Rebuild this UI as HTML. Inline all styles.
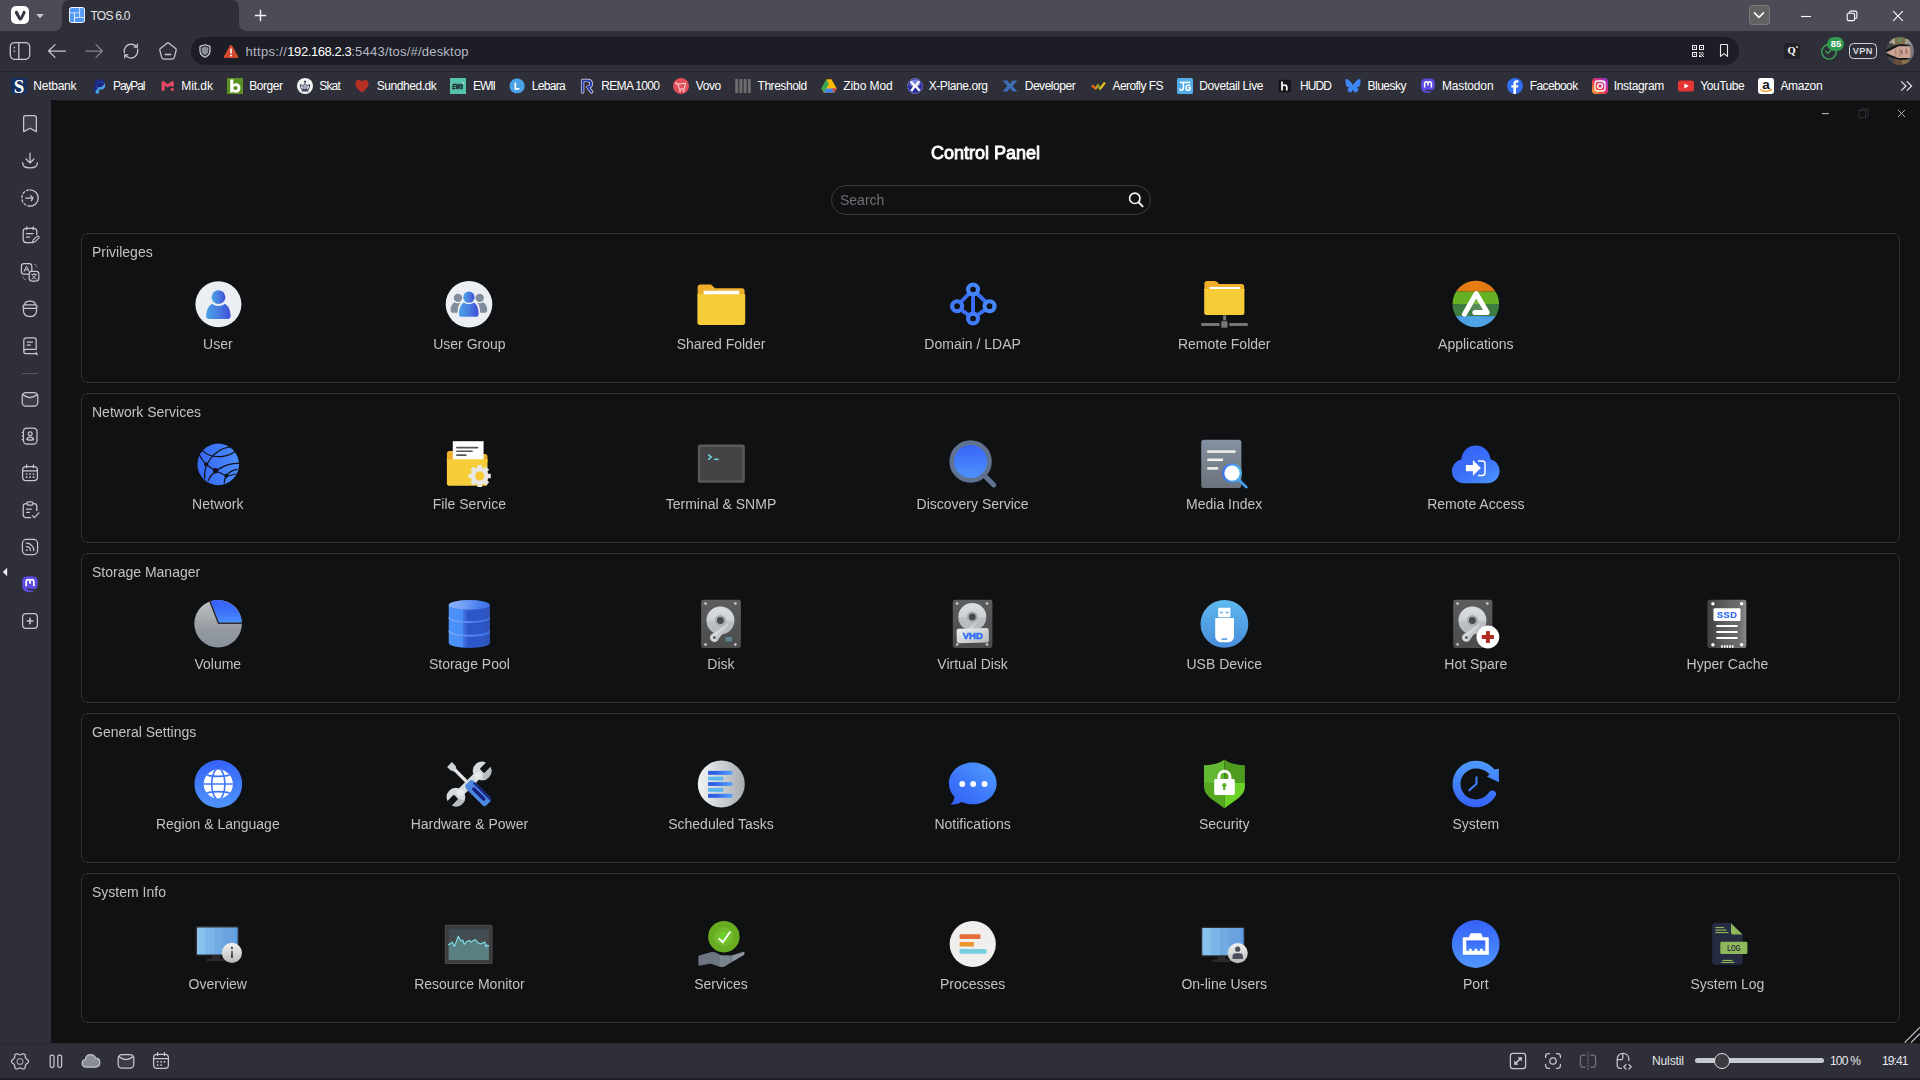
<!DOCTYPE html>
<html lang="en"><head><meta charset="utf-8"><title>TOS 6.0</title>
<style>
*{box-sizing:border-box;margin:0;padding:0}
html,body{width:1920px;height:1080px;overflow:hidden;background:#101113;font-family:"Liberation Sans",sans-serif;}
.abs{position:absolute}
#tabbar{position:absolute;left:0;top:0;width:1920px;height:31px;background:#4b4c56}
#toolbar{position:absolute;left:0;top:31px;width:1920px;height:41px;background:#2e2f38}
#tbline{position:absolute;left:0;top:71px;width:1920px;height:1px;background:#23242b}
#bmbar{position:absolute;left:0;top:72px;width:1920px;height:28px;background:#2e2f38}
#side{position:absolute;left:0;top:100px;width:51px;height:943px;background:#2e2f38}
#status{position:absolute;left:0;top:1043px;width:1920px;height:37px;background:#2e2f38;border-bottom:2px solid #1e1f25;box-shadow:inset 0 1px 0 #27282f}
#page{position:absolute;left:51px;top:100px;width:1869px;height:943px;background:#101113;border-radius:5px 5px 0 5px}
.sec{position:absolute;left:81px;width:1819px;height:150px;border:1px solid #303133;border-radius:6px}
.sect{position:absolute;left:92px;font-size:14px;line-height:16px;color:#c2c2c2;white-space:nowrap}
.lab{position:absolute;width:251.6px;text-align:center;font-size:14px;line-height:16px;color:#c2c2c2;white-space:nowrap}
.ico{position:absolute;width:48px;height:48px;overflow:visible}
.bm{position:absolute;top:78px;height:16px;font-size:12px;line-height:16px;color:#fff;white-space:nowrap}
svg{display:block;overflow:visible}
#pagecontent{position:absolute;left:0;top:0;width:1920px;height:1080px;will-change:transform}

.tx{position:absolute;white-space:nowrap}
.ic{position:absolute}
.st{fill:none;stroke:#c6c7cd;stroke-width:1.25;stroke-linecap:round;stroke-linejoin:round}
</style></head>
<body>
<div id="tabbar"></div><div id="toolbar"></div><div id="tbline"></div><div id="bmbar"></div>
<svg class="ic" style="left:54px;top:0" width="194" height="31" viewBox="0 0 194 31"><path d="M0 31C5 31 8 28 8 23V8C8 3 11 0 16 0H177C182 0 185 3 185 8V23C185 28 188 31 193 31Z" fill="#2e2f38"/></svg>
<svg class="ic" style="left:11px;top:6px" width="18" height="18" viewBox="0 0 18 18" ><rect width="18" height="18" rx="5" fill="#fff"/><path d="M5 6.2C5.6 5.2 7 5.4 7.4 6.4L9.3 10.4L11 6.6C11.2 5.6 12.4 5.2 13 6C13.4 6.6 13.3 7.2 13 7.8L10.6 12.4C10 13.5 8.4 13.5 7.8 12.4L5.2 7.8C4.9 7.2 4.8 6.7 5 6.2Z" fill="#34353e" transform="translate(9.1 9.4) scale(1.28 1.25) translate(-9 -9.2)"/></svg><svg class="ic" style="left:35px;top:13px" width="10" height="6" viewBox="0 0 10 6" ><path d="M1.2 1H8.8L5 5.2Z" fill="#c9c9cd"/></svg><svg class="ic" style="left:69.1px;top:7.1px" width="16" height="16" viewBox="0 0 16 16" ><rect width="16" height="16" rx="3" fill="#f4f6fa"/><path d="M.9 3.2C.9 1.8 1.8 .9 3.2 .9H10.3V5.4H.9Z" fill="#529af5"/><path d="M11.1 .9H12.8C14.2 .9 15.1 1.8 15.1 3.2V10H11.1Z" fill="#529af5"/><path d="M5.9 10.8H15.1V12.8C15.1 14.2 14.2 15.1 12.8 15.1H5.9Z" fill="#529af5"/><path d="M.9 6.2H5V15.1H3.2C1.8 15.1 .9 14.2 .9 12.8Z" fill="#529af5"/><rect x="5.9" y="6.2" width="4.4" height="3.8" fill="#529af5"/></svg><span class="tx" style="left:90.4px;top:7.8px;font-size:12px;line-height:16px;color:#e4e4e8;font-weight:normal;letter-spacing:-0.724px;">TOS 6.0</span><svg class="ic" style="left:254px;top:9px" width="13" height="13" viewBox="0 0 13 13" ><path d="M6.5 .8V12.2M.8 6.5H12.2" stroke="#f2f2f4" stroke-width="1.4" fill="none"/></svg><div class="ic" style="left:1748.5px;top:5px;width:21px;height:19.5px;background:#626264;border:1px solid #7b7b7e;border-radius:3.5px"></div><svg class="ic" style="left:1753px;top:10px" width="12" height="10" viewBox="0 0 12 10" ><path d="M1 2.4L6 7.4L11 2.4" fill="none" stroke="#fff" stroke-width="1.5"/></svg><svg class="ic" style="left:1801px;top:15px" width="10" height="3" viewBox="0 0 10 3" ><path d="M0 1.5H10" stroke="#fff" stroke-width="1.1"/></svg><svg class="ic" style="left:1846px;top:10px" width="12" height="12" viewBox="0 0 12 12" ><rect x="1.2" y="3.2" width="7.4" height="7.4" rx="1.4" fill="none" stroke="#fff" stroke-width="1.1"/><path d="M3.4 3V2.6C3.4 1.7 4 1.1 4.9 1.1H9.2C10.2 1.1 10.9 1.8 10.9 2.8V7C10.9 7.9 10.3 8.5 9.4 8.5H8.8" fill="none" stroke="#fff" stroke-width="1.1"/></svg><svg class="ic" style="left:1892px;top:10px" width="12" height="12" viewBox="0 0 12 12" ><path d="M1.2 1.2L10.8 10.8M10.8 1.2L1.2 10.8" stroke="#fff" stroke-width="1.1" fill="none"/></svg>
<svg class="ic" style="left:9px;top:41px" width="22" height="20" viewBox="0 0 22 20" ><rect x="1.3" y="1.5" width="19.4" height="16.8" rx="4.2" fill="none" stroke="#c9cad0" stroke-width="1.25" stroke-linecap="round" stroke-linejoin="round"/><path d="M9.8 1.5V18.3" fill="none" stroke="#c9cad0" stroke-width="1.25" stroke-linecap="round" stroke-linejoin="round"/><path d="M5.4 6.6V6.8M5.4 10V10.2" fill="none" stroke="#c9cad0" stroke-width="1.25" stroke-linecap="round" stroke-linejoin="round" style="stroke-width:1.5"/></svg><svg class="ic" style="left:47px;top:43px" width="20" height="16" viewBox="0 0 20 16" ><path d="M18.4 8H1.6M8 1.6L1.6 8L8 14.4" fill="none" stroke="#c9cad0" stroke-width="1.25" stroke-linecap="round" stroke-linejoin="round"/></svg><svg class="ic" style="left:84px;top:43px" width="20" height="16" viewBox="0 0 20 16" ><path d="M1.6 8H18.4M12 1.6L18.4 8L12 14.4" fill="none" stroke="#85868f" stroke-width="1.25" stroke-linecap="round" stroke-linejoin="round"/></svg><svg class="ic" style="left:121px;top:41px" width="20" height="20" viewBox="0 0 20 20" ><path d="M3.4 11.8C2.4 7.6 5.4 3 10 3C12.4 3 14.4 4 15.8 5.8M16.6 8.2C17.6 12.4 14.6 17 10 17C7.6 17 5.6 16 4.2 14.2" fill="none" stroke="#c9cad0" stroke-width="1.25" stroke-linecap="round" stroke-linejoin="round"/><path d="M13.2 6.2L16.2 6.2L16.4 3.2M6.8 13.8L3.8 13.8L3.6 16.8" fill="none" stroke="#c9cad0" stroke-width="1.25" stroke-linecap="round" stroke-linejoin="round"/></svg><svg class="ic" style="left:158px;top:41px" width="20" height="20" viewBox="0 0 20 20" ><path d="M10 1.6L17.6 7.4C18.2 7.9 18.4 8.5 18.2 9.2L16.4 16.2C16.1 17.4 15.2 18 14 18H6C4.8 18 3.9 17.4 3.6 16.2L1.8 9.2C1.6 8.5 1.8 7.9 2.4 7.4Z" fill="none" stroke="#c9cad0" stroke-width="1.25" stroke-linecap="round" stroke-linejoin="round"/><path d="M7.4 13.6H12.6" fill="none" stroke="#c9cad0" stroke-width="1.25" stroke-linecap="round" stroke-linejoin="round" style="stroke-width:1.5"/></svg><div class="ic" style="left:190.5px;top:37px;width:1548px;height:28px;border-radius:14px;background:#1c1d25"></div><svg class="ic" style="left:199px;top:44px" width="12" height="14" viewBox="0 0 12 14" ><path d="M6 .8L11 2.4V6.8C11 9.8 9 12 6 13.2C3 12 1 9.8 1 6.8V2.4Z" fill="none" stroke="#d4d5da" stroke-width="1.2" stroke-linejoin="round"/><path d="M6 2.6L9.4 3.7V6.8C9.4 8.9 8 10.5 6 11.4C4 10.5 2.6 8.9 2.6 6.8V3.7Z" fill="#8a8c94"/></svg><svg class="ic" style="left:223px;top:44px" width="16" height="15" viewBox="0 0 16 15" ><path d="M8 .9C8.5 .9 8.9 1.2 9.1 1.6L15 12.2C15.5 13.1 14.9 14 13.9 14H2.1C1.1 14 .5 13.1 1 12.2L6.9 1.6C7.1 1.2 7.5 .9 8 .9Z" fill="#d24a2e"/><rect x="7.2" y="4.6" width="1.6" height="5" rx=".5" fill="#fff"/><circle cx="8" cy="11.5" r=".95" fill="#fff"/></svg><span class="tx" style="left:245.4px;top:42.5px;font-size:13px;line-height:17px;color:#b6b8c6;font-weight:normal;letter-spacing:0.359px;">https://</span><span class="tx" style="left:287.3px;top:42.5px;font-size:13px;line-height:17px;color:#fff;font-weight:normal;letter-spacing:-0.426px;">192.168.2.3</span><span class="tx" style="left:351.3px;top:42.5px;font-size:13px;line-height:17px;color:#b6b8c6;font-weight:normal;letter-spacing:0.211px;">:5443/tos/#/desktop</span><svg class="ic" style="left:1692px;top:45px" width="12" height="12" viewBox="0 0 12 12" ><rect x="0.5" y="0.5" width="4" height="4" fill="none" stroke="#ececf0" stroke-width="1"/><rect x="1.9" y="1.9" width="1.2" height="1.2" fill="#ececf0"/><rect x="7.5" y="0.5" width="4" height="4" fill="none" stroke="#ececf0" stroke-width="1"/><rect x="8.9" y="1.9" width="1.2" height="1.2" fill="#ececf0"/><rect x="0.5" y="7.5" width="4" height="4" fill="none" stroke="#ececf0" stroke-width="1"/><rect x="1.9" y="8.9" width="1.2" height="1.2" fill="#ececf0"/><path d="M7 7H8.4V8.4H7ZM9.8 7H11V8.2H9.8ZM8.4 8.4H9.8V9.8H8.4ZM11 8.4H12V9.6H11ZM7 10H8.4V12H7ZM9.8 9.8H11V11H9.8ZM11 11H12V12H11ZM8.4 11H9.8V12H8.4Z" fill="#ececf0"/></svg><svg class="ic" style="left:1719px;top:43px" width="10" height="15" viewBox="0 0 10 15" ><path d="M1.5 2.2C1.5 1.8 1.8 1.5 2.2 1.5H7.8C8.2 1.5 8.5 1.8 8.5 2.2V13.4L5 10.6L1.5 13.4Z" fill="none" stroke="#ececf0" stroke-width="1.1" stroke-linejoin="round"/></svg><div class="ic" style="left:1784px;top:43px;width:16px;height:16px;border-radius:3.5px;background:#222227"></div><span class="tx" style="left:1787.6px;top:44px;font:bold 10.5px/14px 'Liberation Serif',serif;color:#fff">Q</span><span class="ic" style="left:1796.2px;top:46px;width:1.4px;height:1.6px;background:#ddd;border-radius:1px"></span><svg class="ic" style="left:1820px;top:42.5px" width="18" height="18" viewBox="0 0 18 18" ><circle cx="9" cy="8.8" r="7.3" fill="none" stroke="#3ea455" stroke-width="1.4"/><path d="M5.4 7.8L8 10.4L11 7.2" fill="none" stroke="#3ea455" stroke-width="1.3"/></svg><div class="ic" style="left:1827.4px;top:36.8px;width:17px;height:14px;border-radius:7px;background:#2f9a50"></div><span class="tx" style="left:1827.4px;width:17px;text-align:center;top:36.8px;font-size:9.6px;line-height:14px;font-weight:bold;color:#fff;letter-spacing:-.2px">85</span><div class="ic" style="left:1848.6px;top:42.8px;width:28.4px;height:16.4px;border:1.6px solid #d2d2d8;border-radius:4.5px"></div><span class="tx" style="left:1848.6px;width:28.4px;text-align:center;top:44px;font-size:9.2px;line-height:14px;font-weight:bold;color:#d8d8dc;letter-spacing:.35px">VPN</span><svg class="ic" style="left:1885.8px;top:37px" width="28" height="28" viewBox="0 0 28 28" ><defs><clipPath id="avc"><circle cx="14" cy="14.1" r="14"/></clipPath></defs><g clip-path="url(#avc)"><rect width="28" height="29" fill="#45474b"/><path d="M7 0H24V8H7Z" fill="#7d6b48"/><path d="M11 1H16V5H11Z" fill="#5d8f68" opacity=".7"/><path d="M3 3L9 1V7L3 6Z" fill="#b8b5a0" opacity=".8"/><path d="M19 2H27V9H19Z" fill="#b0b0ae" opacity=".7"/><path d="M8 22H22V29H8Z" fill="#6b4f3c"/><path d="M16 23H24V27H16Z" fill="#8a7a4a" opacity=".8"/><path d="M22 6C27 8 28.5 11 28.5 14C28.5 18 27 21 22 23L21 21C24 19 25 17 25 14C25 11 24 9 21 8Z" fill="#77787c"/><path d="M0 12.5C4 11 8 8.6 12 7.6C16 6.8 21 7 24 8.6L24 10C20 9 16 9 12.4 9.4L0 15Z" fill="#17181a"/><path d="M0 18.6C4 20 8 21.6 12 22.4C16 23.2 21 23 24 21.6L24 20.4C20 21.2 16 21.2 12.4 20.9L0 16.4Z" fill="#17181a"/><path d="M.2 15.4L5 13.2L12.4 9.3L24.2 9.2C25 13 25 17 24.2 21L12.4 21L5 18Z" fill="#caa597"/><path d="M9 12.5H10.2V18.6H9ZM13.2 11.8H14.4V19.4H13.2Z" fill="#a8766a" opacity=".8"/><path d="M15.2 13H16.6V17H15.2Z" fill="#96564e"/><path d="M19.6 11L21.6 14L20.6 17.6L19.4 15Z" fill="#a85a58" opacity=".8"/><path d="M16.6 14L19 13.4L18 15.4Z" fill="#e8d0b0" opacity=".8"/><path d="M10.6 11L12 11.6L10.8 13ZM10.4 16.4L11.8 16.8L10.8 18.2Z" fill="#b8a040" opacity=".8"/></g></svg>
<svg class="ic" style="left:11px;top:78px" width="16" height="16" viewBox="0 0 16 16" ><rect width="16" height="16" fill="#14305e"/><text x="8" y="14.6" text-anchor="middle" font-family="Liberation Serif,serif" font-weight="bold" font-size="19" fill="#fff">S</text></svg><span class="tx" style="left:33.3px;top:77.5px;font-size:12px;line-height:16px;color:#fff;font-weight:normal;letter-spacing:-0.243px;">Netbank</span><svg class="ic" style="left:91px;top:78px" width="16" height="16" viewBox="0 0 16 16" ><path d="M4.4 1.6H10.2C12.6 1.6 13.6 3.2 13.2 5.2C12.7 8 10.8 9.2 8.4 9.2H6.8L6 13.6H2.4Z" fill="#1b2b8a"/><path d="M6.4 4.6H11.2C13.4 4.6 14.6 5.8 14.2 8C13.7 10.6 12 11.6 9.8 11.6H8.4L7.7 15.4H4.4Z" fill="#4aa3e8"/><path d="M6.4 4.6H11.2C12.2 4.6 12.9 4.8 13.3 5.2C12.7 8 10.8 9.2 8.4 9.2H6.8L6.3 12H5Z" fill="#1a237e"/></svg><span class="tx" style="left:113.0px;top:77.5px;font-size:12px;line-height:16px;color:#fff;font-weight:normal;letter-spacing:-1.122px;">PayPal</span><svg class="ic" style="left:159.5px;top:78px" width="16" height="16" viewBox="0 0 16 16" ><path d="M3.1 11.6V4.6L7.7 7.9L12.3 4.6V7.2" fill="none" stroke="#e84a64" stroke-width="3" stroke-linecap="round" stroke-linejoin="round"/><circle cx="12.3" cy="11.4" r="1.55" fill="#e84a64"/></svg><span class="tx" style="left:181.2px;top:77.5px;font-size:12px;line-height:16px;color:#fff;font-weight:normal;letter-spacing:-0.036px;">Mit.dk</span><svg class="ic" style="left:227px;top:78px" width="16" height="16" viewBox="0 0 16 16" ><rect width="16" height="16" fill="#5b8f22"/><path d="M3.2 1.4H6.4V6.4C7.2 5.7 8.2 5.3 9.2 5.3C11.8 5.3 13.4 7.3 13.4 9.9C13.4 12.7 11.6 14.7 8.9 14.7C7.8 14.7 6.8 14.3 6.1 13.6L5.9 14.4H3.2ZM8.5 8C7.3 8 6.5 8.9 6.5 10C6.5 11.2 7.3 12.1 8.5 12.1C9.7 12.1 10.5 11.2 10.5 10C10.5 8.9 9.7 8 8.5 8Z" fill="#fff"/></svg><span class="tx" style="left:249.2px;top:77.5px;font-size:12px;line-height:16px;color:#fff;font-weight:normal;letter-spacing:-0.439px;">Borger</span><svg class="ic" style="left:297px;top:78px" width="16" height="16" viewBox="0 0 16 16" ><circle cx="8" cy="8" r="8" fill="#f4f4f4"/><g fill="none" stroke="#26324e" stroke-width="1"><path d="M3.2 6.8C3.4 8.8 4 10.4 4.8 11.6H11.2C12 10.4 12.6 8.800000000000001 12.8 6.8C11.6 6.6 10.6 7.2 10 8.4C9.8 7 9 6.2 8 6C7 6.2 6.2 7 6 8.4C5.4 7.2 4.4 6.6 3.2 6.8Z"/><path d="M4.6 12.9H11.4" stroke-width="1.3"/><path d="M8 2.6V5.4M6.9 3.7H9.1"/><path d="M6 8.6L6.6 11.4M8 7V11.4M10 8.6L9.4 11.4" stroke-width=".7"/></g></svg><span class="tx" style="left:319.2px;top:77.5px;font-size:12px;line-height:16px;color:#fff;font-weight:normal;letter-spacing:-0.804px;">Skat</span><svg class="ic" style="left:354px;top:78px" width="16" height="16" viewBox="0 0 16 16" ><path d="M8 14.6C5 12.2 1.4 9.4 1.4 5.8C1.4 3.6 3 2 5 2C6.2 2 7.3 2.7 8 3.8C8.7 2.7 9.8 2 11 2C13 2 14.6 3.6 14.6 5.8C14.6 9.4 11 12.2 8 14.6Z" fill="#b52f22"/></svg><span class="tx" style="left:376.7px;top:77.5px;font-size:12px;line-height:16px;color:#fff;font-weight:normal;letter-spacing:-0.436px;">Sundhed.dk</span><svg class="ic" style="left:450px;top:78px" width="16" height="16" viewBox="0 0 16 16" ><rect width="16" height="16" fill="#57c2aa"/><text x="7.6" y="10.9" text-anchor="middle" font-family="Liberation Sans,sans-serif" font-weight="bold" font-style="italic" font-size="6.4" fill="#10151c" stroke="#10151c" stroke-width=".3" textLength="10.6" lengthAdjust="spacingAndGlyphs">EWII</text><path d="M11.6 5.2L13.6 4.6L13.2 6.4" fill="none" stroke="#f2f2f2" stroke-width=".7"/></svg><span class="tx" style="left:473.0px;top:77.5px;font-size:12px;line-height:16px;color:#fff;font-weight:normal;letter-spacing:-1.050px;">EWII</span><svg class="ic" style="left:509px;top:78px" width="16" height="16" viewBox="0 0 16 16" ><path d="M8 0.6C12.6 0.6 15.6 4 15.6 8C15.6 12.4 12.6 15.4 8.4 15.4C3.6 15.4 0.6 12 0.6 8.6C0.6 4 3.6 0.6 8 0.6Z" fill="#4aa3e6" transform="rotate(-15 8 8)"/><path d="M6.3 4.6V10.8H10.4" fill="none" stroke="#fff" stroke-width="1.7"/></svg><span class="tx" style="left:531.7px;top:77.5px;font-size:12px;line-height:16px;color:#fff;font-weight:normal;letter-spacing:-0.679px;">Lebara</span><svg class="ic" style="left:579px;top:78px" width="16" height="16" viewBox="0 0 16 16" ><path d="M3.6 14V2.4H8.4C10.8 2.4 12.2 3.8 12.2 5.8C12.2 7.6 11 8.9 9 9.1L12.6 14" fill="none" stroke="#f2e6e0" stroke-width="3.4" stroke-linejoin="round" stroke-linecap="round"/><path d="M3.6 14V2.4H8.4C10.8 2.4 12.2 3.8 12.2 5.8C12.2 7.6 11 8.9 9 9.1L12.6 14" fill="none" stroke="#2136a8" stroke-width="2" stroke-linejoin="round" stroke-linecap="round"/></svg><span class="tx" style="left:601.3px;top:77.5px;font-size:12px;line-height:16px;color:#fff;font-weight:normal;letter-spacing:-0.672px;">REMA 1000</span><svg class="ic" style="left:673px;top:78px" width="16" height="16" viewBox="0 0 16 16" ><circle cx="8" cy="8" r="8" fill="#e4505a"/><g fill="none" stroke="#fbe3e5" stroke-width="1"><path d="M2.4 5.4L5 6.2L6.4 11H11.2L12.6 5.2L5 6.2"/><path d="M2.6 4L4 6"/></g><circle cx="7" cy="13" r=".9" fill="#fbe3e5"/><circle cx="10.8" cy="13" r=".9" fill="#fbe3e5"/></svg><span class="tx" style="left:695.8px;top:77.5px;font-size:12px;line-height:16px;color:#fff;font-weight:normal;letter-spacing:-0.426px;">Vovo</span><svg class="ic" style="left:735px;top:78px" width="16" height="16" viewBox="0 0 16 16" ><rect x=".2" y="1" width="3" height="14" fill="#6c6c6e"/><rect x="4.4" y="1" width="3" height="14" fill="#6c6c6e"/><rect x="8.6" y="1" width="3" height="14" fill="#6c6c6e"/><rect x="12.8" y="1" width="3" height="14" fill="#6c6c6e"/></svg><span class="tx" style="left:757.5px;top:77.5px;font-size:12px;line-height:16px;color:#fff;font-weight:normal;letter-spacing:-0.453px;">Threshold</span><svg class="ic" style="left:821px;top:78px" width="16" height="16" viewBox="0 0 16 16" ><path d="M5.6 1.6H10.4L15.6 10.6L13.2 14.6H2.8L0.4 10.6Z" fill="#fbbc04"/><path d="M5.6 1.6L8 5.8L2.8 14.6L0.4 10.6Z" fill="#34a853"/><path d="M10.4 1.6L15.6 10.6H10.8L5.6 1.6Z" fill="#fbbc04"/><path d="M5.3 10.6H15.6L13.2 14.6H2.8Z" fill="#4285f4"/><path d="M10.8 10.6H15.6L13.2 14.6Z" fill="#ea4335"/></svg><span class="tx" style="left:843.3px;top:77.5px;font-size:12px;line-height:16px;color:#fff;font-weight:normal;letter-spacing:-0.091px;">Zibo Mod</span><svg class="ic" style="left:906.7px;top:78px" width="16" height="16" viewBox="0 0 16 16" ><circle cx="8" cy="8" r="7.8" fill="#2a2f9c"/><circle cx="8" cy="8" r="7.4" fill="none" stroke="#c8ccf0" stroke-width=".8" stroke-dasharray="1.2 1"/><ellipse cx="8" cy="5.4" rx="5.4" ry="3.8" fill="#8f97e6" opacity=".8"/><path d="M3.8 3.4L7.8 8L4.2 13M12.2 3.2L8.6 8L12.6 12.8" fill="none" stroke="#fff" stroke-width="2.2"/></svg><span class="tx" style="left:928.7px;top:77.5px;font-size:12px;line-height:16px;color:#fff;font-weight:normal;letter-spacing:-0.407px;">X-Plane.org</span><svg class="ic" style="left:1002px;top:78px" width="16" height="16" viewBox="0 0 16 16" ><path d="M0.6 2.4H5.4L8 6L10.6 2.4H15.4L10.6 8L15.4 13.6H10.6L8 10L5.4 13.6H0.6L5.4 8Z" fill="#3c6fb8"/></svg><span class="tx" style="left:1024.7px;top:77.5px;font-size:12px;line-height:16px;color:#fff;font-weight:normal;letter-spacing:-0.467px;">Developer</span><svg class="ic" style="left:1090.5px;top:78px" width="16" height="16" viewBox="0 0 16 16" ><path d="M1 7.4L4.6 10.6L7 7L9 11L13.8 4.6" fill="none" stroke="#e8a020" stroke-width="2" stroke-linejoin="round"/><path d="M7 7L9 11L11.4 7.8" fill="none" stroke="#6a9e2e" stroke-width="2" stroke-linejoin="round"/><path d="M9 11L13.8 4.6" fill="none" stroke="#e8c020" stroke-width="2"/><path d="M1 7.4L4.6 10.6" stroke="#e06010" stroke-width="2"/></svg><span class="tx" style="left:1112.5px;top:77.5px;font-size:12px;line-height:16px;color:#fff;font-weight:normal;letter-spacing:-0.562px;">Aerofly FS</span><svg class="ic" style="left:1177px;top:78px" width="16" height="16" viewBox="0 0 16 16" ><rect width="16" height="16" rx="1.6" fill="#54ade6"/><g fill="none" stroke="#fff" stroke-width="1.5"><path d="M2.8 4.4H13.2"/><path d="M6.4 4.4V9.8C6.4 11.4 5.6 12.2 4.4 12.2C3.4 12.2 2.8 11.6 2.8 10.6"/><path d="M13.2 7.2H11C9.8 7.2 9.2 7.9 9.2 9V10.4C9.2 11.5 9.8 12.2 11 12.2C12.2 12.2 13.2 11.5 13.2 10.4V9.6H11.4"/></g></svg><span class="tx" style="left:1199.2px;top:77.5px;font-size:12px;line-height:16px;color:#fff;font-weight:normal;letter-spacing:-0.369px;">Dovetail Live</span><svg class="ic" style="left:1276.5px;top:78px" width="16" height="16" viewBox="0 0 16 16" ><rect x="1.6" y="1.8" width="12.6" height="12.6" rx="2.4" fill="#15161b"/><path d="M5 3.6V12.4M5 8.6C5.6 7.4 6.6 7 7.6 7C9 7 9.8 7.8 9.8 9.4V12.4" fill="none" stroke="#fff" stroke-width="1.7"/></svg><span class="tx" style="left:1300.0px;top:77.5px;font-size:12px;line-height:16px;color:#fff;font-weight:normal;letter-spacing:-0.943px;">HUDD</span><svg class="ic" style="left:1345px;top:78px" width="16" height="16" viewBox="0 0 16 16" ><path d="M8 7.2C7.2 5.6 5 2.8 3 1.6C1.4 0.7 0.4 1 0.4 2.6C0.4 3.6 0.9 7 1.3 7.8C1.9 9.2 3.6 9.7 5.2 9.4C2.8 9.9 1.6 11.4 3.6 13.6C5.8 15.8 7.2 13.2 8 11.4C8.8 13.2 10 15.7 12.4 13.6C14.4 11.4 13.2 9.9 10.8 9.4C12.4 9.7 14.1 9.2 14.7 7.8C15.1 7 15.6 3.6 15.6 2.6C15.6 1 14.6 0.7 13 1.6C11 2.8 8.8 5.6 8 7.2Z" fill="#3f86f6"/></svg><span class="tx" style="left:1367.5px;top:77.5px;font-size:12px;line-height:16px;color:#fff;font-weight:normal;letter-spacing:-0.519px;">Bluesky</span><svg class="ic" style="left:1420.4px;top:78px" width="16" height="16" viewBox="0 0 16 16" ><path d="M15 5.4C15 2.4 12.8 1.2 12.8 1.2C11 0.4 5 0.4 3.2 1.2C3.2 1.2 1 2.4 1 5.4C1 8.9 0.8 13.4 4.6 14.4C6 14.8 7.2 14.9 8.2 14.8C10 14.7 11 14.2 11 14.2L10.9 13C10.9 13 9.6 13.4 8.2 13.3C6.800000000000001 13.3 5.3 13.2 5.1 11.4C9 12.3 12.300000000000001 11.8 13.3 11.700000000000001C14.5 11.3 15 9.5 15 5.4Z" fill="#5b4be0"/><path d="M4.6 9.6V5.6C4.6 4.4 5.3 3.7 6.3 3.7C7.4 3.7 8 4.4 8 5.6V7.400000000000001M11.4 9.6V5.6C11.4 4.4 10.7 3.7 9.7 3.7C8.6 3.7 8 4.4 8 5.6" fill="none" stroke="#fff" stroke-width="1.5"/></svg><span class="tx" style="left:1442.0px;top:77.5px;font-size:12px;line-height:16px;color:#fff;font-weight:normal;letter-spacing:-0.163px;">Mastodon</span><svg class="ic" style="left:1507px;top:78px" width="16" height="16" viewBox="0 0 16 16" ><circle cx="8" cy="8" r="8" fill="#2f6ff0"/><path d="M9 16V9.6H11L11.4 7.2H9V5.8C9 5 9.3 4.5 10.4 4.5H11.5V2.5C11 2.4 10.2 2.3 9.6 2.3C7.6 2.3 6.4 3.5 6.4 5.6V7.2H4.4V9.6H6.4V16Z" fill="#fff"/></svg><span class="tx" style="left:1529.7px;top:77.5px;font-size:12px;line-height:16px;color:#fff;font-weight:normal;letter-spacing:-0.600px;">Facebook</span><svg class="ic" style="left:1592px;top:78px" width="16" height="16" viewBox="0 0 16 16" ><defs><linearGradient id="igg" x1="0" y1="1" x2="1" y2="0"><stop offset="0" stop-color="#fdb734"/><stop offset=".35" stop-color="#f0483a"/><stop offset=".65" stop-color="#d32e8e"/><stop offset="1" stop-color="#7a3ed8"/></linearGradient></defs><rect width="16" height="16" rx="3.8" fill="url(#igg)"/><rect x="3" y="3" width="10" height="10" rx="2.8" fill="none" stroke="#fff" stroke-width="1.3"/><circle cx="8" cy="8" r="2.4" fill="none" stroke="#fff" stroke-width="1.3"/><circle cx="11.2" cy="4.8" r=".7" fill="#fff"/></svg><span class="tx" style="left:1613.7px;top:77.5px;font-size:12px;line-height:16px;color:#fff;font-weight:normal;letter-spacing:-0.340px;">Instagram</span><svg class="ic" style="left:1678px;top:78px" width="16" height="16" viewBox="0 0 16 16" ><rect x="0" y="2.6" width="16" height="11" rx="2.6" fill="#e53535"/><path d="M6.4 5.6L10.8 8.1L6.4 10.6Z" fill="#fff"/></svg><span class="tx" style="left:1700.2px;top:77.5px;font-size:12px;line-height:16px;color:#fff;font-weight:normal;letter-spacing:-0.437px;">YouTube</span><svg class="ic" style="left:1758px;top:78px" width="16" height="16" viewBox="0 0 16 16" ><rect width="16" height="16" rx="2.4" fill="#fff"/><text x="8" y="10.6" text-anchor="middle" style="font-family:'Liberation Sans',sans-serif;font-weight:bold;font-size:13.5px" fill="#111">a</text><path d="M2.4 11.6C5.4 13.9 10 13.9 13.2 11.8" fill="none" stroke="#f29a1f" stroke-width="1.2" stroke-linecap="round"/><path d="M11.8 11L13.7 11.2L13 13" fill="none" stroke="#f29a1f" stroke-width=".9"/></svg><span class="tx" style="left:1780.5px;top:77.5px;font-size:12px;line-height:16px;color:#fff;font-weight:normal;letter-spacing:-0.389px;">Amazon</span><svg class="ic" style="left:1900px;top:80px" width="13" height="12" viewBox="0 0 13 12" ><path d="M1.2 1.4L6 6L1.2 10.6M6.8 1.4L11.6 6L6.8 10.6" fill="none" stroke="#e8e8ec" stroke-width="1.2"/></svg>
<div id="side"><svg class="ic" style="left:20px;top:14px" width="20" height="20" viewBox="0 0 20 20" ><path d="M3.6 3.6C3.6 2.3 4.4 1.5 5.7 1.5H14.3C15.6 1.5 16.4 2.3 16.4 3.6V17.6L10 14.2L3.6 17.6Z" fill="none" stroke="#c6c7cd" stroke-width="1.25" stroke-linecap="round" stroke-linejoin="round" style="fill:#3c3d46"/></svg><svg class="ic" style="left:20px;top:51px" width="20" height="20" viewBox="0 0 20 20" ><path d="M10 2V11.6M6 8L10 12L14 8" fill="none" stroke="#c6c7cd" stroke-width="1.25" stroke-linecap="round" stroke-linejoin="round"/><path d="M2.6 11.6C2.8 15.4 4.4 16.8 10 16.8C15.6 16.8 17.2 15.4 17.4 11.6" fill="none" stroke="#c6c7cd" stroke-width="1.25" stroke-linecap="round" stroke-linejoin="round"/></svg><svg class="ic" style="left:20px;top:88px" width="20" height="20" viewBox="0 0 20 20" ><path d="M10 1.8A8.2 8.2 0 0 1 10 18.2" fill="none" stroke="#c6c7cd" stroke-width="1.25" stroke-linecap="round" stroke-linejoin="round"/><path d="M10 18.2A8.2 8.2 0 0 1 10 1.8" fill="none" stroke="#c6c7cd" stroke-width="1.25" stroke-linecap="round" stroke-linejoin="round" stroke-dasharray="2.2 2.2"/><path d="M5.6 10H13M10.6 7.6L13 10L11.4 12.6" fill="none" stroke="#c6c7cd" stroke-width="1.25" stroke-linecap="round" stroke-linejoin="round"/></svg><svg class="ic" style="left:20px;top:125px" width="20" height="20" viewBox="0 0 20 20" ><path d="M13 17.6H6.2C4.2 17.6 3.2 16.6 3.2 14.6V6.4C3.2 4.4 4.2 3.4 6.2 3.4H13.8C15.8 3.4 16.8 4.4 16.8 6.4V9.6" fill="none" stroke="#c6c7cd" stroke-width="1.25" stroke-linecap="round" stroke-linejoin="round"/><path d="M6.8 1.8V4.6M13.2 1.8V4.6M6.4 8.6H13M6.4 12H9.6" fill="none" stroke="#c6c7cd" stroke-width="1.25" stroke-linecap="round" stroke-linejoin="round"/><path d="M12.6 17.4L13.2 15L17 11.4C17.6 10.9 18.4 11 18.8 11.4C19.3 11.9 19.3 12.7 18.8 13.2L15 16.8Z" fill="none" stroke="#c6c7cd" stroke-width="1.25" stroke-linecap="round" stroke-linejoin="round" style="stroke-width:1.1"/></svg><svg class="ic" style="left:20px;top:162px" width="20" height="20" viewBox="0 0 20 20" ><rect x="1.4" y="1.6" width="10.4" height="10.4" rx="2.6" fill="none" stroke="#c6c7cd" stroke-width="1.25" stroke-linecap="round" stroke-linejoin="round"/><rect x="9.2" y="9.4" width="9.6" height="9.6" rx="2.4" fill="none" stroke="#c6c7cd" stroke-width="1.25" stroke-linecap="round" stroke-linejoin="round" style="fill:#2e2f38"/><path d="M4.2 9.4L6.6 4L9 9.4M5 7.8H8.2" fill="none" stroke="#c6c7cd" stroke-width="1.25" stroke-linecap="round" stroke-linejoin="round" style="stroke-width:1"/><path d="M11.6 12.4H16.4M14 11.6V12.4M15.8 12.4C15.4 14.6 13.8 16.2 11.8 17M12.6 13.8C13.4 15.2 14.6 16.4 16.4 17" fill="none" stroke="#c6c7cd" stroke-width="1.25" stroke-linecap="round" stroke-linejoin="round" style="stroke-width:1"/><path d="M14.4 2.4C16 2.6 16.8 3.6 17 5.2M5.6 17.6C4 17.4 3.2 16.4 3 14.8" fill="none" stroke="#c6c7cd" stroke-width="1.25" stroke-linecap="round" stroke-linejoin="round" style="stroke:#85868f;stroke-width:1"/></svg><svg class="ic" style="left:20px;top:199px" width="20" height="20" viewBox="0 0 20 20" ><path d="M4.6 5.6C4.8 3 6.6 2 10 2C13.4 2 15.2 3 15.4 5.6" fill="none" stroke="#c6c7cd" stroke-width="1.25" stroke-linecap="round" stroke-linejoin="round"/><path d="M3 7.6C3 6.4 3.8 5.8 5 5.8H15C16.2 5.8 17 6.4 17 7.6C17 8.8 16.2 9.4 15 9.4H5C3.8 9.4 3 8.8 3 7.6Z" fill="none" stroke="#c6c7cd" stroke-width="1.25" stroke-linecap="round" stroke-linejoin="round"/><path d="M3.4 9.2C3 14.8 5 17.6 10 17.6C15 17.6 17 14.8 16.6 9.2" fill="none" stroke="#c6c7cd" stroke-width="1.25" stroke-linecap="round" stroke-linejoin="round"/></svg><svg class="ic" style="left:20px;top:236px" width="20" height="20" viewBox="0 0 20 20" ><path d="M3.8 15.4V4.4C3.8 2.8 4.8 1.8 6.4 1.8H14C15.4 1.8 16.2 2.6 16.2 4V13.4H6C4.6 13.4 3.8 14.2 3.8 15.4C3.8 16.8 4.6 17.6 6 17.6H16.2V16.2" fill="none" stroke="#c6c7cd" stroke-width="1.25" stroke-linecap="round" stroke-linejoin="round"/><path d="M7.2 6H12.6M7.2 9.2H10.2" fill="none" stroke="#c6c7cd" stroke-width="1.25" stroke-linecap="round" stroke-linejoin="round"/><path d="M15.8 17.6L17.4 18.6" fill="none" stroke="#c6c7cd" stroke-width="1.25" stroke-linecap="round" stroke-linejoin="round"/></svg><div class="ic" style="left:22px;top:273px;width:16px;height:1px;background:#55565e"></div><svg class="ic" style="left:20px;top:289px" width="20" height="20" viewBox="0 0 20 20" ><rect x="2.2" y="3.6" width="15.6" height="13.6" rx="3.6" fill="none" stroke="#c6c7cd" stroke-width="1.25" stroke-linecap="round" stroke-linejoin="round" style="fill:#3a3b44"/><path d="M2.8 5.6C6 7.9 8 8.7 10 8.7C12 8.7 14 7.9 17.2 5.6" fill="none" stroke="#c6c7cd" stroke-width="1.25" stroke-linecap="round" stroke-linejoin="round"/></svg><svg class="ic" style="left:20px;top:326px" width="20" height="20" viewBox="0 0 20 20" ><rect x="3.4" y="2" width="13.6" height="16" rx="3.6" fill="none" stroke="#c6c7cd" stroke-width="1.25" stroke-linecap="round" stroke-linejoin="round"/><circle cx="10.2" cy="7.8" r="1.9" fill="none" stroke="#c6c7cd" stroke-width="1.25" stroke-linecap="round" stroke-linejoin="round"/><path d="M6.8 13.4C7 11.8 8.2 11 10.2 11C12.2 11 13.4 11.8 13.6 13.4C12.6 14 11.4 14.2 10.2 14.2C9 14.2 7.8 14 6.8 13.4Z" fill="none" stroke="#c6c7cd" stroke-width="1.25" stroke-linecap="round" stroke-linejoin="round"/><path d="M2.2 6.4H3.4M2.2 10H3.4M2.2 13.6H3.4" fill="none" stroke="#c6c7cd" stroke-width="1.25" stroke-linecap="round" stroke-linejoin="round"/></svg><svg class="ic" style="left:20px;top:363px" width="20" height="20" viewBox="0 0 20 20" ><rect x="2.6" y="3.6" width="14.8" height="14" rx="3.4" fill="none" stroke="#c6c7cd" stroke-width="1.25" stroke-linecap="round" stroke-linejoin="round"/><path d="M6.6 1.8V4.6M13.4 1.8V4.6M2.8 7.8H17.2" fill="none" stroke="#c6c7cd" stroke-width="1.25" stroke-linecap="round" stroke-linejoin="round"/><path d="M6.6 11H6.8M10 11H10.2M13.4 11H13.6M6.6 14.2H6.8M10 14.2H10.2M13.4 14.2H13.6" fill="none" stroke="#c6c7cd" stroke-width="1.25" stroke-linecap="round" stroke-linejoin="round" style="stroke-width:1.7"/></svg><svg class="ic" style="left:20px;top:400px" width="20" height="20" viewBox="0 0 20 20" ><path d="M7 3.6H6C4.2 3.6 3.2 4.6 3.2 6.4V14.8C3.2 16.6 4.2 17.6 6 17.6H10.6M13 3.6H14C15.8 3.6 16.8 4.6 16.8 6.4V10.4" fill="none" stroke="#c6c7cd" stroke-width="1.25" stroke-linecap="round" stroke-linejoin="round"/><rect x="7" y="1.8" width="6" height="3.4" rx="1.4" fill="none" stroke="#c6c7cd" stroke-width="1.25" stroke-linecap="round" stroke-linejoin="round"/><path d="M6.6 9H11.4M6.6 12.4H9.4" fill="none" stroke="#c6c7cd" stroke-width="1.25" stroke-linecap="round" stroke-linejoin="round"/><path d="M12.4 15.6L14.4 17.6L18.8 12.8" fill="none" stroke="#c6c7cd" stroke-width="1.25" stroke-linecap="round" stroke-linejoin="round"/></svg><svg class="ic" style="left:20px;top:437px" width="20" height="20" viewBox="0 0 20 20" ><rect x="2.4" y="2.4" width="15.2" height="15.2" rx="4" fill="none" stroke="#c6c7cd" stroke-width="1.25" stroke-linecap="round" stroke-linejoin="round"/><path d="M6.4 6.2C10.6 6.2 13.8 9.4 13.8 13.6M6.4 9.6C8.8 9.6 10.4 11.2 10.4 13.6" fill="none" stroke="#c6c7cd" stroke-width="1.25" stroke-linecap="round" stroke-linejoin="round"/><circle cx="6.8" cy="13.2" r=".9" fill="#c6c7cd"/></svg><svg class="ic" style="left:21px;top:474.5px" width="18" height="19" viewBox="0 0 16 16" ><path d="M15 5.4C15 2.4 12.8 1.2 12.8 1.2C11 0.4 5 0.4 3.2 1.2C3.2 1.2 1 2.4 1 5.4C1 8.9 0.8 13.4 4.6 14.4C6 14.8 7.2 14.9 8.2 14.8C10 14.7 11 14.2 11 14.2L10.9 13C10.9 13 9.6 13.4 8.2 13.3C6.8 13.3 5.3 13.2 5.1 11.4C9 12.3 12.3 11.8 13.3 11.7C14.5 11.3 15 9.5 15 5.4Z" fill="#5b4be0"/><path d="M4.6 9.6V5.6C4.6 4.4 5.3 3.7 6.3 3.7C7.4 3.7 8 4.4 8 5.6V7.4M11.4 9.6V5.6C11.4 4.4 10.7 3.7 9.7 3.7C8.6 3.7 8 4.4 8 5.6" fill="none" stroke="#fff" stroke-width="1.5"/></svg><svg class="ic" style="left:20px;top:511px" width="20" height="20" viewBox="0 0 20 20" ><rect x="2.6" y="2.6" width="14.8" height="14.8" rx="3.4" fill="none" stroke="#c6c7cd" stroke-width="1.25" stroke-linecap="round" stroke-linejoin="round"/><path d="M10 7.2V12.8M7.2 10H12.8" fill="none" stroke="#c6c7cd" stroke-width="1.25" stroke-linecap="round" stroke-linejoin="round" style="stroke-width:1.6"/></svg><svg class="ic" style="left:2px;top:467px" width="6" height="10" viewBox="0 0 6 10" ><path d="M5.2 .8V9.2L.8 5Z" fill="#ececf0"/></svg></div>
<div id="page"></div>
<div id="pagecontent">
<div class="abs" id="title" style="left:51px;width:1869px;top:142px;text-align:center;font-size:18px;line-height:22px;color:#fff;-webkit-text-stroke:0.9px #fff">Control Panel</div>
<div class="abs" id="search" style="left:831px;top:185px;width:320px;height:30px;border:1px solid #3c3d40;border-radius:15px"></div>
<div class="abs" id="searchph" style="left:840px;top:192px;font-size:14px;line-height:16px;color:#6f7073">Search</div>
<svg class="abs" style="left:1127px;top:191px" width="18" height="18" viewBox="0 0 18 18"><circle cx="7.8" cy="7.3" r="5.2" fill="none" stroke="#f2f2f2" stroke-width="1.7"/><path d="M11.6 11.3L15.6 15.4" stroke="#f2f2f2" stroke-width="2" stroke-linecap="round"/></svg>
<div class="abs" style="left:56px;top:100px;width:1864px;height:1px;background:#22232a"></div>
<svg class="ic" style="left:1821px;top:112px" width="10" height="4" viewBox="0 0 10 4" ><path d="M.8 1.6H7.8" stroke="#b5b5b7" stroke-width="1.1"/></svg><svg class="ic" style="left:1858px;top:108px" width="11" height="11" viewBox="0 0 11 11" ><rect x=".8" y="2.6" width="6.8" height="7.2" fill="none" stroke="#303134" stroke-width="1"/><path d="M2.8 2.6L3.6 .9H10.1V7.6L7.6 8.8" fill="none" stroke="#303134" stroke-width="1"/></svg><svg class="ic" style="left:1897px;top:109px" width="9" height="9" viewBox="0 0 9 9" ><path d="M.9 .9L8 8M8 .9L.9 8" stroke="#b5b5b7" stroke-width="1" fill="none"/></svg><svg class="ic" style="left:1902px;top:1026px" width="18" height="17" viewBox="0 0 18 17" ><path d="M2.6 16.6L17.8 1.4M9 16.6L17.8 7.8" stroke="#c2c2c6" stroke-width="1.3" fill="none"/></svg><div class="sec" style="top:233px"></div>
<div class="sect" style="top:244px">Privileges</div>
<svg class="ico" style="left:193.75px;top:280px" viewBox="0 0 48 48"><defs><linearGradient id="g1" x1="0" y1="0" x2="1" y2="0"><stop offset="0" stop-color="#4aa2e8"/><stop offset="0.5" stop-color="#4a7ee0"/><stop offset="1" stop-color="#3f4dd6"/></linearGradient></defs><circle cx="24.4" cy="24.2" r="23" fill="#ebeff3"/>
<circle cx="24.5" cy="17.2" r="6.9" fill="url(#g1)"/>
<path d="M12.2 36.2 C12.2 29.5 15 25.5 18.2 23.8 C20 25.2 22.1 26 24.5 26 C26.9 26 29 25.2 30.8 23.8 C34 25.5 36.6 29.5 36.6 36.2 C36.6 38 35.3 39 33.8 39 L15 39 C13.5 39 12.2 38 12.2 36.2Z" fill="url(#g1)"/></svg>
<div class="lab" style="left:92.0px;top:336px">User</div>
<svg class="ico" style="left:445.25px;top:280px" viewBox="0 0 48 48"><defs><linearGradient id="g2" x1="0" y1="0" x2="1" y2="0"><stop offset="0" stop-color="#4aa2e8"/><stop offset="0.5" stop-color="#4a7ee0"/><stop offset="1" stop-color="#3f4dd6"/></linearGradient></defs><circle cx="24" cy="24.2" r="23.3" fill="#ebeff3"/>
<circle cx="13" cy="17.9" r="4.2" fill="#818c9c"/><circle cx="34.7" cy="17.9" r="4.2" fill="#818c9c"/>
<path d="M5.6 30.6C5.6 26 7.3 23.3 9.6 22.2C10.6 22.9 11.7 23.3 13 23.3C13.9 23.3 14.7 23.1 15.4 22.8C13.6 25 12.6 28.3 12.6 32.8L7.6 32.8C6.4 32.8 5.6 31.9 5.6 30.6Z" fill="#818c9c"/>
<path d="M42.2 30.6C42.2 26 40.5 23.3 38.2 22.2C37.2 22.9 36.1 23.3 34.8 23.3C33.9 23.3 33.1 23.1 32.4 22.8C34.2 25 35.2 28.3 35.2 32.8L40.2 32.8C41.4 32.8 42.2 31.9 42.2 30.6Z" fill="#818c9c"/>
<circle cx="23.9" cy="17.2" r="5.6" fill="url(#g2)"/>
<path d="M14 34.2C14 28.2 16 24.3 18.9 22.6C20.3 23.7 22 24.3 23.9 24.3C25.8 24.3 27.5 23.7 28.9 22.6C31.8 24.3 33.6 28.2 33.6 34.2C33.6 35.8 32.5 36.8 31.1 36.8L16.5 36.8C15.1 36.8 14 35.8 14 34.2Z" fill="url(#g2)"/></svg>
<div class="lab" style="left:343.6px;top:336px">User Group</div>
<svg class="ico" style="left:696.75px;top:280px" viewBox="0 0 48 48"><path d="M0.6 16V7.2C0.6 5.7 1.7 4.6 3.2 4.6H13.2C14 4.6 14.6 4.9 15.1 5.4L18 8.2H45C46.5 8.2 47.6 9.3 47.6 10.8V16Z" fill="#efaf2b"/>
<rect x="6.6" y="10.7" width="35.6" height="5" fill="#fff"/>
<path d="M0.4 14.3H48.2V42.6C48.2 44 47.1 45.1 45.7 45.1H2.9C1.5 45.1 0.4 44 0.4 42.6Z" fill="#f6cd38"/></svg>
<div class="lab" style="left:595.2px;top:336px">Shared Folder</div>
<svg class="ico" style="left:948.25px;top:280px" viewBox="0 0 48 48"><g transform="translate(.35 0)"><g fill="none" stroke="#3a6ef6" stroke-width="3.9" stroke-linecap="round">
<path d="M24.7 14V34"/><path d="M21.3 13L12 22.5"/><path d="M28.1 13L38 22.5"/><path d="M12.5 29.6L21 35.5"/><path d="M37 29.6L28.4 35.5"/></g>
<g fill="none" stroke="#3d74f7" stroke-width="4.2">
<circle cx="24.7" cy="9.5" r="4.95" stroke="#4484fa"/><circle cx="8.8" cy="26.2" r="4.95" stroke="#3f79f8"/><circle cx="41.2" cy="26.2" r="4.95" stroke="#4687fa"/><circle cx="24.7" cy="38.5" r="4.95" stroke="#3f7af8"/></g></g></svg>
<div class="lab" style="left:846.8px;top:336px">Domain / LDAP</div>
<svg class="ico" style="left:1199.75px;top:280px" viewBox="0 0 48 48"><path d="M4.4 11V3.4C4.4 2 5.4 1 6.8 1H15C15.7 1 16.2 1.2 16.7 1.7L19.2 3.9H41.8C43.2 3.9 44.2 4.9 44.2 6.3V11Z" fill="#efaf2b"/>
<rect x="9.5" y="6.9" width="30.6" height="3" fill="#fff"/>
<path d="M4.2 9H44.4V32.8C44.4 34.1 43.4 35.1 42.1 35.1H6.5C5.2 35.1 4.2 34.1 4.2 32.8Z" fill="#f6cd38"/>
<rect x="23.1" y="35.4" width="3" height="5" fill="#767676"/><rect x="21.3" y="41.2" width="6.2" height="6.5" fill="#767676"/>
<rect x="1.2" y="43" width="18.4" height="3" fill="#767676"/><rect x="29.3" y="43" width="18.4" height="3" fill="#767676"/></svg>
<div class="lab" style="left:1098.4px;top:336px">Remote Folder</div>
<svg class="ico" style="left:1451.25px;top:280px" viewBox="0 0 48 48"><defs><clipPath id="c3"><circle cx="24.8" cy="24" r="23.3"/></clipPath></defs>
<g clip-path="url(#c3)"><rect x="0" y="0" width="50" height="11.5" fill="#e07a15"/><rect x="0" y="11.5" width="50" height="12.5" fill="#66b024"/><rect x="0" y="24" width="50" height="12.1" fill="#3f7c40"/><rect x="0" y="36.1" width="50" height="13" fill="#4b9fe2"/>
<rect x="16.5" y="0" width="16" height="11.5" fill="#e87f12" opacity=".6"/><rect x="16.5" y="36.1" width="16" height="13" fill="#52a8e8" opacity=".6"/></g>
<path d="M23.8 32.4H36.2L25.2 13.6L13.4 34.2" fill="none" stroke="#fff" stroke-width="5" stroke-linecap="round" stroke-linejoin="round"/>
<path d="M25.2 18.4L31.8 29.9H19Z" fill="#fff" opacity=".12"/></svg>
<div class="lab" style="left:1350.0px;top:336px">Applications</div>
<div class="sec" style="top:393px"></div>
<div class="sect" style="top:404px">Network Services</div>
<svg class="ico" style="left:193.75px;top:440px" viewBox="0 0 48 48"><defs><linearGradient id="g4" x1="0" y1="0" x2="1" y2="0"><stop offset="0" stop-color="#3666f6"/><stop offset="1" stop-color="#4a8dfb"/></linearGradient></defs><circle cx="24.2" cy="24.4" r="20.8" fill="url(#g4)"/>
<g fill="none" stroke="#111318" stroke-width="1.25" stroke-linecap="round">
<path d="M8.8 10.9C14 16 20 17 26.4 16.6C32 16.2 37 14.6 40.3 12"/>
<path d="M36 6.9C28 8 21 12.5 16.2 19C12 25 10 32 10.7 38.5"/>
<path d="M5.8 15.5C8 19.5 10 22.5 12.2 24.4L21.6 30.8L32.3 35.7C36 36 39 35 41.3 34"/>
<path d="M44.5 23.5C38 23.4 30 26 25.1 28.9C20 32 16 36.5 14.2 40.6"/>
<path d="M43.2 29.3C39 29.8 35 32 32.3 35.7C31 38 30.2 40.5 30.2 42.8"/></g>
<circle cx="12.2" cy="24.4" r="2.1" fill="#111318"/><circle cx="21.6" cy="30.8" r="2.7" fill="#111318"/><circle cx="32.3" cy="35.7" r="2" fill="#111318"/></svg>
<div class="lab" style="left:92.0px;top:496px">Network</div>
<svg class="ico" style="left:445.25px;top:440px" viewBox="0 0 48 48"><path d="M1.9 22V13.6C1.9 12.2 3 11.1 4.4 11.1H10V14H40C41.4 14 42.5 15.1 42.5 16.5V22Z" fill="#efaf2b"/>
<rect x="7.8" y="1.2" width="30.8" height="19" fill="#fff"/>
<rect x="11" y="6.8" width="22.4" height="1.6" rx=".8" fill="#555"/><rect x="11" y="10.4" width="16.9" height="1.6" rx=".8" fill="#555"/><rect x="11" y="14.3" width="10.7" height="1.6" rx=".8" fill="#555"/>
<path d="M1.9 19.2H42.5V43.4C42.5 44.7 41.4 45.8 40.1 45.8H4.3C3 45.8 1.9 44.7 1.9 43.4Z" fill="#f6cd38"/>
<path d="M32.47 27.69 L32.34 24.95 L37.06 24.95 L36.93 27.69 L38.99 28.55 L40.85 26.52 L44.18 29.85 L42.15 31.71 L43.01 33.77 L45.75 33.64 L45.75 38.36 L43.01 38.23 L42.15 40.29 L44.18 42.15 L40.85 45.48 L38.99 43.45 L36.93 44.31 L37.06 47.05 L32.34 47.05 L32.47 44.31 L30.41 43.45 L28.55 45.48 L25.22 42.15 L27.25 40.29 L26.39 38.23 L23.65 38.36 L23.65 33.64 L26.39 33.77 L27.25 31.71 L25.22 29.85 L28.55 26.52 L30.41 28.55Z" fill="#e9e7e4"/><circle cx="34.7" cy="36.0" r="8.6" fill="#e9e7e4"/><circle cx="34.7" cy="36" r="4.6" fill="#f5cb35"/></svg>
<div class="lab" style="left:343.6px;top:496px">File Service</div>
<svg class="ico" style="left:696.75px;top:440px" viewBox="0 0 48 48"><rect x="0.8" y="4.6" width="47" height="38.2" rx="2" fill="#5a5a5a"/>
<rect x="3.2" y="7" width="42.2" height="33.4" rx=".6" fill="#444"/>
<path d="M11.3 14.6L14.2 17.1L11.3 19.6" fill="none" stroke="#6fd6ea" stroke-width="1.5"/><rect x="17.2" y="18.6" width="4.4" height="1.5" fill="#6fd6ea"/></svg>
<div class="lab" style="left:595.2px;top:496px">Terminal &amp; SNMP</div>
<svg class="ico" style="left:948.25px;top:440px" viewBox="0 0 48 48"><defs><linearGradient id="g5" x1="0" y1="0" x2="0" y2="1"><stop offset="0" stop-color="#3561f8"/><stop offset="1" stop-color="#4f96fc"/></linearGradient></defs><path d="M36.6 35.7L45.8 44.9" stroke="#5f7391" stroke-width="5" stroke-linecap="round"/>
<circle cx="22.6" cy="21.5" r="18.9" fill="url(#g5)" stroke="#5f7391" stroke-width="4.6"/></svg>
<div class="lab" style="left:846.8px;top:496px">Discovery Service</div>
<svg class="ico" style="left:1199.75px;top:440px" viewBox="0 0 48 48"><defs><linearGradient id="g6" x1="0" y1="0" x2="0" y2="1"><stop offset="0" stop-color="#8591a3"/><stop offset="0.45" stop-color="#78848e"/><stop offset="1" stop-color="#6c737e"/></linearGradient><linearGradient id="g7" x1="0" y1="0" x2="1" y2="0"><stop offset="0" stop-color="#3a76f0"/><stop offset="1" stop-color="#52b4ee"/></linearGradient></defs><rect x="1.2" y="-0.2" width="40.2" height="48.2" rx="2.8" fill="url(#g6)"/>
<rect x="7.3" y="10.3" width="28.2" height="2.6" fill="#f1efeb"/><rect x="7.3" y="18.5" width="15.8" height="2.6" fill="#f1efeb"/><rect x="7.3" y="27.1" width="10.9" height="2.6" fill="#f1efeb"/>
<path d="M38.4 39.5L46.4 47.2" stroke="#46a0ee" stroke-width="2.6" stroke-linecap="round"/>
<circle cx="32" cy="33.1" r="8.8" fill="#fff" stroke="url(#g7)" stroke-width="2.3"/></svg>
<div class="lab" style="left:1098.4px;top:496px">Media Index</div>
<svg class="ico" style="left:1451.25px;top:440px" viewBox="0 0 48 48"><defs><linearGradient id="g8" x1="0.2" y1="0.1" x2="0.9" y2="1"><stop offset="0" stop-color="#3663f7"/><stop offset="0.5" stop-color="#3b70f8"/><stop offset="1" stop-color="#4c95fc"/></linearGradient></defs>
<path d="M12.9 43.2C6.2 43.2 0.9 37.9 0.9 31.3C0.9 25.6 4.9 20.8 10.4 19.6C10.6 11.8 17 5.6 24.9 5.6C32.7 5.6 39 11.6 39.5 19.2C44.8 20.5 48.6 25.3 48.6 30.9C48.6 37.7 43.1 43.2 36.3 43.2Z" fill="url(#g8)"/>
<path d="M14.9 25H21.9V20L29.9 27.9L21.9 35.8V31.2H14.9Z" fill="#fff"/>
<path d="M26.9 21H31.4C32.9 21 34 22.1 34 23.6V32.8C34 34.3 32.9 35.4 31.4 35.4H26.9" fill="none" stroke="#fff" stroke-width="1.5"/></svg>
<div class="lab" style="left:1350.0px;top:496px">Remote Access</div>
<div class="sec" style="top:553px"></div>
<div class="sect" style="top:564px">Storage Manager</div>
<svg class="ico" style="left:193.75px;top:600px" viewBox="0 0 48 48"><defs><linearGradient id="g9" x1="0" y1="0" x2="0" y2="1"><stop offset="0" stop-color="#bcc1c5"/><stop offset="0.35" stop-color="#a9acb0"/><stop offset="0.6" stop-color="#969aa1"/><stop offset="1" stop-color="#88929a"/></linearGradient><linearGradient id="g10" x1="0" y1="0" x2="0" y2="1"><stop offset="0" stop-color="#3561f8"/><stop offset="0.55" stop-color="#3d72f9"/><stop offset="1" stop-color="#4b93fd"/></linearGradient></defs><circle cx="24.1" cy="23.7" r="23.8" fill="url(#g9)"/>
<path d="M24.9 22.8L16.6 1.2A23.8 23.8 0 0 1 47.9 22.8Z" fill="url(#g10)"/>
<path d="M15.9 1.4L24.5 23.2H47.9" fill="none" stroke="#2b2d33" stroke-width="1.5"/></svg>
<div class="lab" style="left:92.0px;top:656px">Volume</div>
<svg class="ico" style="left:445.25px;top:600px" viewBox="0 0 48 48"><defs><linearGradient id="g20" x1="0" y1="0" x2="1" y2="0"><stop offset="0" stop-color="#86aff8"/><stop offset="0.3" stop-color="#78a4f6"/><stop offset="0.55" stop-color="#5f8ff2"/><stop offset="0.75" stop-color="#4a7eea"/><stop offset="1" stop-color="#3d6ee6"/></linearGradient><linearGradient id="g21" x1="0" y1="0" x2="1" y2="0"><stop offset="0" stop-color="#4c92f9"/><stop offset="0.33" stop-color="#4a8ef8"/><stop offset="0.36" stop-color="#3f72e2"/><stop offset="0.43" stop-color="#3a62d4"/><stop offset="0.46" stop-color="#2d57c8"/><stop offset="0.83" stop-color="#2d57c8"/><stop offset="0.86" stop-color="#2f55bd"/><stop offset="1" stop-color="#2f55bd"/></linearGradient><linearGradient id="g22" x1="0" y1="0" x2="1" y2="0"><stop offset="0" stop-color="#7aaaf8"/><stop offset="0.45" stop-color="#5d92f5"/><stop offset="0.7" stop-color="#4a80ee"/><stop offset="1" stop-color="#3f6fe8"/></linearGradient></defs>
<path d="M3.7 4.9V43.1C3.7 45.8 12.9 48 24.3 48C35.7 48 44.9 45.8 44.9 43.1V4.9Z" fill="url(#g21)"/>
<path d="M3.7 16.4C5 19.3 13 21.2 24.3 21.2C35.6 21.2 43.6 19.3 44.9 16.4V18.6C43.6 21.3 35.6 23 24.3 23C13 23 5 21.3 3.7 18.6Z" fill="url(#g22)"/>
<path d="M3.7 30C5 32.9 13 34.8 24.3 34.8C35.6 34.8 43.6 32.9 44.9 30V32.2C43.6 34.9 35.6 36.6 24.3 36.6C13 36.6 5 34.9 3.7 32.2Z" fill="url(#g22)"/>
<ellipse cx="24.3" cy="4.9" rx="20.6" ry="4.9" fill="url(#g20)"/></svg>
<div class="lab" style="left:343.6px;top:656px">Storage Pool</div>
<svg class="ico" style="left:696.75px;top:600px" viewBox="0 0 48 48"><defs><linearGradient id="g11" x1="0" y1="0" x2="0" y2="1"><stop offset="0" stop-color="#5c5d5f"/><stop offset="1" stop-color="#4b4b4b"/></linearGradient><linearGradient id="g12" x1="0" y1="0" x2="0" y2="1"><stop offset="0" stop-color="#dbdfe1"/><stop offset="0.5" stop-color="#cdd1d4"/><stop offset="0.52" stop-color="#bcc1c5"/><stop offset="1" stop-color="#b3b9bd"/></linearGradient></defs><rect x="4.1" y="-0.3" width="39.8" height="48.3" rx="2.2" fill="url(#g11)"/><rect x="7.25" y="2.25" width="2.5" height="2.5" rx=".6" transform="rotate(45 8.5 3.5)" fill="#c4c4c4"/><rect x="7.25" y="43.25" width="2.5" height="2.5" rx=".6" transform="rotate(45 8.5 44.5)" fill="#c4c4c4"/><rect x="37.15" y="2.25" width="2.5" height="2.5" rx=".6" transform="rotate(45 38.4 3.5)" fill="#c4c4c4"/><rect x="37.15" y="43.25" width="2.5" height="2.5" rx=".6" transform="rotate(45 38.4 44.5)" fill="#c4c4c4"/><circle cx="23.4" cy="20.5" r="14" fill="url(#g12)"/><circle cx="23.4" cy="20.5" r="5.5" fill="#a7abae"/><circle cx="23.4" cy="20.5" r="3.4" fill="#4a4a4a"/><path d="M20.28 40.70A4.3 4.3 0 1 1 14.32 34.50L30.65 24.04L31.35 24.76Z" fill="#d3d8da"/><path d="M20.28 40.70L31.35 24.76L31.00 24.40L17.30 37.60Z" fill="#c0c6c9"/><circle cx="17.3" cy="37.6" r="1.3" fill="#4a4a4a"/><rect x="28.3" y="37" width="6.9" height="4.6" rx="1" fill="#5d8090"/></svg>
<div class="lab" style="left:595.2px;top:656px">Disk</div>
<svg class="ico" style="left:948.25px;top:600px" viewBox="0 0 48 48"><defs><linearGradient id="g13" x1="0" y1="0" x2="0" y2="1"><stop offset="0" stop-color="#5c5d5f"/><stop offset="1" stop-color="#4b4b4b"/></linearGradient><linearGradient id="g14" x1="0" y1="0" x2="0" y2="1"><stop offset="0" stop-color="#dbdfe1"/><stop offset="0.5" stop-color="#cdd1d4"/><stop offset="0.52" stop-color="#bcc1c5"/><stop offset="1" stop-color="#b3b9bd"/></linearGradient><linearGradient id="g15" x1="0" y1="0" x2="1" y2="1"><stop offset="0" stop-color="#eceeef"/><stop offset="0.5" stop-color="#d4d7d9"/><stop offset="1" stop-color="#b4b9bd"/></linearGradient></defs><rect x="4.8" y="-0.3" width="39.6" height="48.3" rx="2.2" fill="url(#g13)"/><rect x="7.85" y="2.25" width="2.5" height="2.5" rx=".6" transform="rotate(45 9.1 3.5)" fill="#c4c4c4"/><rect x="7.85" y="43.25" width="2.5" height="2.5" rx=".6" transform="rotate(45 9.1 44.5)" fill="#c4c4c4"/><rect x="37.75" y="2.25" width="2.5" height="2.5" rx=".6" transform="rotate(45 39 3.5)" fill="#c4c4c4"/><rect x="37.75" y="43.25" width="2.5" height="2.5" rx=".6" transform="rotate(45 39 44.5)" fill="#c4c4c4"/><circle cx="24.3" cy="16.9" r="14" fill="url(#g14)"/><circle cx="24.3" cy="16.9" r="5.5" fill="#a7abae"/><circle cx="24.3" cy="16.9" r="3.4" fill="#4a4a4a"/>
<path d="M31.6 19.2L14 33L22 33Z" fill="#c9ced1"/><path d="M31.6 19.2L22 33L26 30Z" fill="#b6bcc0"/>
<rect x="8.7" y="28.3" width="32.1" height="14.6" rx="2.2" fill="url(#g15)" transform="rotate(-1.5 24.7 35.6)"/>
<text x="24.8" y="38.9" text-anchor="middle" font-family="Liberation Sans,sans-serif" font-weight="bold" font-size="9.6" fill="#2f6cf6" stroke="#2f6cf6" stroke-width=".5">VHD</text></svg>
<div class="lab" style="left:846.8px;top:656px">Virtual Disk</div>
<svg class="ico" style="left:1199.75px;top:600px" viewBox="0 0 48 48"><defs><linearGradient id="g16" x1="0" y1="0" x2="0" y2="1"><stop offset="0" stop-color="#5fbcef"/><stop offset="0.15" stop-color="#5ab2eb"/><stop offset="0.4" stop-color="#55a5e6"/><stop offset="0.7" stop-color="#4f99e0"/><stop offset="1" stop-color="#4a8edb"/></linearGradient></defs><circle cx="24.4" cy="23.9" r="23.9" fill="url(#g16)"/>
<rect x="18.2" y="7.8" width="12.2" height="9.4" rx=".6" fill="#fff"/><rect x="20" y="11.8" width="2.7" height="1.4" fill="#55a9e8"/><rect x="25.8" y="11.8" width="2.7" height="1.4" fill="#55a9e8"/>
<path d="M15.2 18.6C15.2 18.2 15.5 18 15.8 18H33.4C33.8 18 34 18.2 34 18.6V36.2C34 39.5 31.3 42.2 28 42.2H21.2C17.9 42.2 15.2 39.5 15.2 36.2Z" fill="#fff"/>
<rect x="21.6" y="38.3" width="5.6" height="1.6" fill="#4f9be2"/></svg>
<div class="lab" style="left:1098.4px;top:656px">USB Device</div>
<svg class="ico" style="left:1451.25px;top:600px" viewBox="0 0 48 48"><defs><linearGradient id="g17" x1="0" y1="0" x2="0" y2="1"><stop offset="0" stop-color="#5c5d5f"/><stop offset="1" stop-color="#4b4b4b"/></linearGradient><linearGradient id="g18" x1="0" y1="0" x2="0" y2="1"><stop offset="0" stop-color="#dbdfe1"/><stop offset="0.5" stop-color="#cdd1d4"/><stop offset="0.52" stop-color="#bcc1c5"/><stop offset="1" stop-color="#b3b9bd"/></linearGradient></defs><rect x="2.2" y="-0.3" width="39.2" height="48.3" rx="2.2" fill="url(#g17)"/><rect x="5.35" y="2.25" width="2.5" height="2.5" rx=".6" transform="rotate(45 6.6 3.5)" fill="#c4c4c4"/><rect x="5.35" y="43.05" width="2.5" height="2.5" rx=".6" transform="rotate(45 6.6 44.3)" fill="#c4c4c4"/><rect x="35.05" y="2.25" width="2.5" height="2.5" rx=".6" transform="rotate(45 36.3 3.5)" fill="#c4c4c4"/><rect x="35.05" y="43.05" width="2.5" height="2.5" rx=".6" transform="rotate(45 36.3 44.3)" fill="#c4c4c4"/><circle cx="21.4" cy="20.5" r="14" fill="url(#g18)"/><circle cx="21.4" cy="20.5" r="5.5" fill="#a7abae"/><circle cx="21.4" cy="20.5" r="3.4" fill="#4a4a4a"/><path d="M18.29 40.59A4.3 4.3 0 1 1 12.31 34.41L28.45 24.04L29.15 24.76Z" fill="#d3d8da"/><path d="M18.29 40.59L29.15 24.76L28.80 24.40L15.30 37.50Z" fill="#c0c6c9"/><circle cx="15.3" cy="37.5" r="1.3" fill="#4a4a4a"/>
<circle cx="36.9" cy="37" r="11.4" fill="#fff"/><rect x="30.7" y="35" width="12.2" height="4" fill="#b32a1e"/><rect x="34.9" y="31.1" width="4" height="11.8" fill="#b32a1e"/></svg>
<div class="lab" style="left:1350.0px;top:656px">Hot Spare</div>
<svg class="ico" style="left:1702.75px;top:600px" viewBox="0 0 48 48"><defs><linearGradient id="g19" x1="0" y1="0" x2="1" y2="0"><stop offset="0" stop-color="#3d3f41"/><stop offset="0.12" stop-color="#474849"/><stop offset="0.4" stop-color="#5c5c5c"/><stop offset="0.6" stop-color="#666"/><stop offset="0.8" stop-color="#6c6c6c"/><stop offset="0.9" stop-color="#7a7a7a"/><stop offset="1" stop-color="#8c8c8c"/></linearGradient></defs><rect x="4.3" y="-0.2" width="39" height="48.2" rx="2" fill="url(#g19)"/>
<circle cx="9.9" cy="3.7" r="1.7" fill="#fff"/><circle cx="38.6" cy="3.7" r="1.7" fill="#fff"/><circle cx="9.9" cy="44.8" r="1.7" fill="#fff"/><circle cx="38.6" cy="44.8" r="1.7" fill="#fff"/>
<rect x="10.5" y="8.2" width="27" height="12.8" rx="1.2" fill="#fff"/>
<text x="24.1" y="17.9" text-anchor="middle" font-family="Liberation Sans,sans-serif" font-weight="bold" font-size="9.2" fill="#2f6cf6" stroke="#2f6cf6" stroke-width=".15" letter-spacing=".5">SSD</text>
<rect x="13.1" y="24.9" width="21.8" height="2.1" rx="1" fill="#fff"/><rect x="13.1" y="31" width="21.8" height="2.1" rx="1" fill="#fff"/><rect x="13.1" y="37" width="21.8" height="2.1" rx="1" fill="#fff"/>
<rect x="18.1" y="45.2" width="1.6" height="2.6" fill="#fff"/><rect x="20.8" y="45.2" width="1.6" height="2.6" fill="#fff"/><rect x="23.5" y="45.2" width="1.6" height="2.6" fill="#fff"/><rect x="26.2" y="45.2" width="1.6" height="2.6" fill="#fff"/><rect x="28.9" y="45.2" width="1.6" height="2.6" fill="#fff"/></svg>
<div class="lab" style="left:1601.6px;top:656px">Hyper Cache</div>
<div class="sec" style="top:713px"></div>
<div class="sect" style="top:724px">General Settings</div>
<svg class="ico" style="left:193.75px;top:760px" viewBox="0 0 48 48"><defs><linearGradient id="g23" x1="0" y1="0" x2="0" y2="1"><stop offset="0" stop-color="#3561f8"/><stop offset="1" stop-color="#4f96fc"/></linearGradient><clipPath id="c24"><circle cx="24.3" cy="24" r="14.6"/></clipPath></defs><circle cx="24.3" cy="24" r="23.9" fill="url(#g23)"/>
<circle cx="24.3" cy="24" r="14.6" fill="#fff"/>
<g clip-path="url(#c24)" fill="none" stroke="#3f76f9" stroke-width="1.6"><path d="M9 24H40"/><ellipse cx="24.3" cy="24" rx="6.6" ry="15.4"/><path d="M10 13.5C15 17.4 33.6 17.4 38.6 13.5"/><path d="M10 34.5C15 30.6 33.6 30.6 38.6 34.5"/></g></svg>
<div class="lab" style="left:92.0px;top:816px">Region &amp; Language</div>
<svg class="ico" style="left:445.25px;top:760px" viewBox="0 0 48 48"><defs><clipPath id="c37"><path d="M20.8 -3.2A9.3 9.3 0 0 0 20 13.9L20 34.1A9.3 9.3 0 0 0 20.8 51.2L20.8 43.6Q20.8 42.2 22.2 42.2L25.8 42.2Q27.2 42.2 27.2 43.6L27.2 51.2A9.3 9.3 0 0 0 28 34.1L28 13.9A9.3 9.3 0 0 0 27.2 -3.2L27.2 4.4Q27.2 5.8 25.8 5.8L22.2 5.8Q20.8 5.8 20.8 4.4Z"/></clipPath></defs>
<g transform="rotate(45 24 24)"><path d="M20.8 -3.2A9.3 9.3 0 0 0 20 13.9L20 34.1A9.3 9.3 0 0 0 20.8 51.2L20.8 43.6Q20.8 42.2 22.2 42.2L25.8 42.2Q27.2 42.2 27.2 43.6L27.2 51.2A9.3 9.3 0 0 0 28 34.1L28 13.9A9.3 9.3 0 0 0 27.2 -3.2L27.2 4.4Q27.2 5.8 25.8 5.8L22.2 5.8Q20.8 5.8 20.8 4.4Z" fill="#d7dadd"/>
<g clip-path="url(#c37)"><path d="M26.4 -6V6.6L33 13L28.4 16V32L34 38L26.4 42V54H36V-6Z" fill="#b7bcc1"/>
<circle cx="24" cy="11.8" r="3.4" fill="#e9ecee"/><circle cx="24" cy="36.2" r="3.4" fill="#e9ecee"/><circle cx="24" cy="27.5" r="2.4" fill="#e9ecee"/></g></g>
<g transform="rotate(-45 24 24)">
<path d="M20.6 -3.6H27.4V1.2C27.4 2.6 25.7 3.6 25.7 5V24H22.3V5C22.3 3.6 20.6 2.6 20.6 1.2Z" fill="#d0d3d6"/><rect x="23.5" y="4" width="1.2" height="20" fill="#f4f5f6"/>
<path d="M18.5 25L20 22.2H28L29.5 25V48.6C29.5 50.2 28.3 51.4 26.7 51.4H21.3C19.7 51.4 18.5 50.2 18.5 48.6Z" fill="#4d88e0"/>
<path d="M27.2 26.5H29.5V48.6C29.5 50.2 28.4 51.2 27.2 51.4Z" fill="#182688"/>
<rect x="22.1" y="29.2" width="3.4" height="17.6" rx="1.7" fill="#162080"/>
</g></svg>
<div class="lab" style="left:343.6px;top:816px">Hardware &amp; Power</div>
<svg class="ico" style="left:696.75px;top:760px" viewBox="0 0 48 48"><defs><linearGradient id="g25" x1="0" y1="0" x2="1" y2="0"><stop offset="0" stop-color="#f0f2f3"/><stop offset="0.18" stop-color="#e6e9eb"/><stop offset="0.35" stop-color="#d8dbde"/><stop offset="0.5" stop-color="#ccd0d3"/><stop offset="0.65" stop-color="#c2c5ca"/><stop offset="0.82" stop-color="#b4b9bd"/><stop offset="1" stop-color="#a8a9ad"/></linearGradient><linearGradient id="g26" x1="0" y1="0" x2="1" y2="0"><stop offset="0" stop-color="#2a5ae0"/><stop offset="0.35" stop-color="#3163e6"/><stop offset="0.6" stop-color="#3f7ef6"/><stop offset="0.8" stop-color="#4a90f8"/><stop offset="1" stop-color="#58a6f8"/></linearGradient></defs><circle cx="24.3" cy="24" r="23.5" fill="url(#g25)"/>
<rect x="11.1" y="10.9" width="24.3" height="3.9" fill="url(#g26)"/><rect x="11.1" y="16.7" width="15.1" height="3.7" fill="#5cb9ef"/>
<rect x="11.1" y="22.1" width="24.3" height="3.8" fill="url(#g26)"/><rect x="11.1" y="27.9" width="15.1" height="3.9" fill="#5cb9ef"/>
<rect x="11.1" y="33.8" width="24.3" height="4" fill="url(#g26)"/></svg>
<div class="lab" style="left:595.2px;top:816px">Scheduled Tasks</div>
<svg class="ico" style="left:948.25px;top:760px" viewBox="0 0 48 48"><defs><linearGradient id="g27" x1="0.1" y1="0.95" x2="0.9" y2="0.1"><stop offset="0" stop-color="#3563f8"/><stop offset="0.5" stop-color="#3f7bfa"/><stop offset="1" stop-color="#4e99fd"/></linearGradient></defs>
<path d="M24.8 2.6C38 2.6 48.6 11.9 48.6 23.4C48.6 34.9 38 44.2 24.8 44.2C20.8 44.2 17 43.4 13.7 41.9C10.5 43.7 6.5 44.6 2.4 44.6C5.2 42.2 6.6 39.5 6.3 36.5C2.9 33 0.9 28.4 0.9 23.4C0.9 11.9 11.6 2.6 24.8 2.6Z" fill="url(#g27)"/>
<circle cx="14.2" cy="24" r="2.9" fill="#fff"/><circle cx="25.2" cy="24" r="2.9" fill="#fff"/><circle cx="36.6" cy="24" r="2.9" fill="#fff"/></svg>
<div class="lab" style="left:846.8px;top:816px">Notifications</div>
<svg class="ico" style="left:1199.75px;top:760px" viewBox="0 0 48 48"><defs><clipPath id="c28"><path d="M24.4 -0.4C28 3 36 5.2 44.9 5.2V26C44.9 31 43 34 38 38.5L24.4 48.2L10.8 38.5C5.8 34 4 31 4 26V5.2C12.8 5.2 20.8 3 24.4 -0.4Z"/></clipPath></defs>
<g clip-path="url(#c28)"><rect x="0" y="-2" width="24.4" height="25" fill="#62b830"/><rect x="24.4" y="-2" width="25" height="25" fill="#4f9b1f"/><rect x="0" y="23" width="24.4" height="26" fill="#56a821"/><rect x="24.4" y="23" width="25" height="26" fill="#6bd029"/></g>
<path d="M18.9 20V16.8C18.9 13.6 21.3 11.3 24.4 11.3C27.5 11.3 29.9 13.6 29.9 16.8V20" fill="none" stroke="#fff" stroke-width="3"/>
<rect x="14.2" y="19" width="20.6" height="16" rx="1.4" fill="#fff"/>
<circle cx="24.3" cy="25.2" r="2.1" fill="#5cb02a"/><path d="M23.4 25.2H25.2L25.5 29.9H23.1Z" fill="#5cb02a"/></svg>
<div class="lab" style="left:1098.4px;top:816px">Security</div>
<svg class="ico" style="left:1451.25px;top:760px" viewBox="0 0 48 48"><defs><linearGradient id="g29" x1="0" y1="0" x2="0" y2="1"><stop offset="0" stop-color="#4e9afd"/><stop offset="0.5" stop-color="#4180fa"/><stop offset="1" stop-color="#3561f8"/></linearGradient></defs>
<path d="M35.9 16.6L38.6 14.6C35.6 11 30.6 8.6 25 8.6C16.4 8.6 9.5 15.5 9.5 24C9.5 32.5 16.4 39.4 25 39.4C30.4 39.4 35 36.6 37.8 32.6C39 30.8 41.2 30 43.2 31C45.2 32 45.6 34.4 44.4 36.2C40.4 42.8 33.2 47.3 25 47.3C12.1 47.3 1.6 36.9 1.6 24C1.6 11.1 12.1 0.7 25 0.7C32.4 0.7 39 4.1 43.3 9.5L47.9 8.8V22.2Z" fill="url(#g29)"/>
<path d="M25.5 17.3V23.8L18.3 30.3" fill="none" stroke="#3e7af9" stroke-width="2.2" stroke-linecap="round" stroke-linejoin="round"/></svg>
<div class="lab" style="left:1350.0px;top:816px">System</div>
<div class="sec" style="top:873px"></div>
<div class="sect" style="top:884px">System Info</div>
<svg class="ico" style="left:193.75px;top:920px" viewBox="0 0 48 48"><defs><linearGradient id="g30" x1="0" y1="0" x2="1" y2="0"><stop offset="0" stop-color="#8ac3ee"/><stop offset="0.2" stop-color="#85c0ec"/><stop offset="0.22" stop-color="#7cb6e8"/><stop offset="0.42" stop-color="#7cb6e8"/><stop offset="0.44" stop-color="#70abe2"/><stop offset="0.62" stop-color="#70abe2"/><stop offset="0.64" stop-color="#6aa3de"/><stop offset="0.92" stop-color="#68a2de"/><stop offset="0.94" stop-color="#5b9de6"/><stop offset="1" stop-color="#5b9de6"/></linearGradient><linearGradient id="g31" x1="0" y1="0" x2="0" y2="1"><stop offset="0" stop-color="#f0f0f0"/><stop offset="0.5" stop-color="#d9d9d9"/><stop offset="1" stop-color="#b9b9b9"/></linearGradient></defs><path d="M18.55 35.8L17.85 38.2C16.05 38.5 13.5 38.5 12.5 39.2V41.2H31.6V39.2C30.6 38.5 28.05 38.5 26.25 38.2L25.55 35.8Z" fill="#2b2b2d"/><rect x="1.7" y="6.1" width="43.199999999999996" height="29.699999999999996" rx="1.4" fill="#2d2d2f"/><rect x="3.0" y="7.3999999999999995" width="40.599999999999994" height="27.099999999999994" rx=".7" fill="url(#g30)"/><circle cx="37.9" cy="32.8" r="10.1" fill="url(#g31)"/>
<circle cx="37.9" cy="27.9" r="1.15" fill="#3a3f4c"/><path d="M37.4 30.4H38.5L39.1 37.7H36.9Z" fill="#3a3f4c"/></svg>
<div class="lab" style="left:92.0px;top:976px">Overview</div>
<svg class="ico" style="left:445.25px;top:920px" viewBox="0 0 48 48"><defs><linearGradient id="g32" x1="0" y1="0" x2="0" y2="1"><stop offset="0" stop-color="#3d4c55"/><stop offset="0.3" stop-color="#444c50"/><stop offset="1" stop-color="#4a4f50"/></linearGradient></defs><rect x="-0.2" y="4.8" width="47.8" height="39.3" rx="1.8" fill="#505050"/><rect x="0.5" y="5.5" width="46.4" height="37.9" rx="1.2" fill="#3d3d3d"/>
<rect x="3.7" y="9.1" width="40.2" height="31" fill="url(#g32)"/>
<polygon points="3.7,40.1 3.7,24.6 3.2,24.7 5.5,23.4 7.4,22.1 9.1,26.3 9.9,25.5 13.3,16.3 15.9,21.1 17.8,20.1 19.1,24.4 21.7,21.4 24.3,20.5 26.2,22.1 30.1,19.5 33.4,23.1 35.3,24 39.9,22.1 41.2,27 42.3,25 43.9,26.3 43.9,40.1" fill="#5a7f80"/>
<polyline points="3.2,24.7 5.5,23.4 7.4,22.1 9.1,26.3 9.9,25.5 13.3,16.3 15.9,21.1 17.8,20.1 19.1,24.4 21.7,21.4 24.3,20.5 26.2,22.1 30.1,19.5 33.4,23.1 35.3,24 39.9,22.1 41.2,27 42.3,25 43.9,26.3" fill="none" stroke="#7fe3ee" stroke-width="1.1" stroke-linejoin="round"/></svg>
<div class="lab" style="left:343.6px;top:976px">Resource Monitor</div>
<svg class="ico" style="left:696.75px;top:920px" viewBox="0 0 48 48"><circle cx="26.9" cy="16.7" r="15.7" fill="#68ac22"/><circle cx="26.9" cy="16.7" r="9.6" fill="#72b92c"/><circle cx="26.9" cy="16.7" r="5.4" fill="#6bd02a"/>
<path d="M21.6 18.4L25.7 22.3L33.4 11.5" fill="none" stroke="#fff" stroke-width="2"/>
<path d="M1.4 35.7L13.4 32.2C15 31.8 17.5 31.9 18.8 32.5L22.1 34.5L22.1 46.4L14.5 43.9C13.6 43.7 12.6 43.7 11.8 43.9L1.4 45.8Z" fill="#6d7680"/>
<path d="M22.1 34.5C23 34.9 24 35.2 25 35.3L34.5 35.4L34.5 42.2L27.6 46.4C26.4 47.1 25 47.2 23.8 46.9L22.1 46.4Z" fill="#7b8590"/>
<path d="M34.5 35.4L46.8 31.8C47.4 31.7 47.7 32.2 47.5 32.7L47.2 34.3C47.1 34.7 46.9 35 46.5 35.2L34.5 42.2Z" fill="#8b939d"/></svg>
<div class="lab" style="left:595.2px;top:976px">Services</div>
<svg class="ico" style="left:948.25px;top:920px" viewBox="0 0 48 48"><circle cx="24.75" cy="24" r="23.1" fill="#f0efed"/>
<rect x="11.6" y="14.3" width="20.8" height="4.6" rx=".7" fill="#e66c3a"/><rect x="11.6" y="22" width="14.3" height="4.6" rx=".7" fill="#eb962e"/><rect x="11.6" y="29.1" width="26.9" height="4.7" rx=".7" fill="#74cfde"/></svg>
<div class="lab" style="left:846.8px;top:976px">Processes</div>
<svg class="ico" style="left:1199.75px;top:920px" viewBox="0 0 48 48"><defs><linearGradient id="g33" x1="0" y1="0" x2="1" y2="0"><stop offset="0" stop-color="#8ac3ee"/><stop offset="0.2" stop-color="#85c0ec"/><stop offset="0.22" stop-color="#7cb6e8"/><stop offset="0.42" stop-color="#7cb6e8"/><stop offset="0.44" stop-color="#70abe2"/><stop offset="0.62" stop-color="#70abe2"/><stop offset="0.64" stop-color="#6aa3de"/><stop offset="0.92" stop-color="#68a2de"/><stop offset="0.94" stop-color="#5b9de6"/><stop offset="1" stop-color="#5b9de6"/></linearGradient><linearGradient id="g34" x1="0" y1="0" x2="0" y2="1"><stop offset="0" stop-color="#f0f0f0"/><stop offset="0.5" stop-color="#d9d9d9"/><stop offset="1" stop-color="#b9b9b9"/></linearGradient></defs><path d="M18.2 36.5L17.5 38.9C15.7 39.199999999999996 13.5 39.199999999999996 12.5 39.9V41.9H30.9V39.9C29.9 39.199999999999996 27.7 39.199999999999996 25.9 38.9L25.2 36.5Z" fill="#2b2b2d"/><rect x="1" y="6.7" width="43.9" height="29.8" rx="1.4" fill="#2d2d2f"/><rect x="2.3" y="8.0" width="41.3" height="27.2" rx=".7" fill="url(#g33)"/><circle cx="37.7" cy="33.1" r="10.1" fill="url(#g34)"/>
<circle cx="37.7" cy="29.2" r="2.6" fill="#4b505b"/><path d="M32.5 38.9V36.2C32.5 34.5 33.8 33.2 35.5 33.2H39.9C41.6 33.2 42.9 34.5 42.9 36.2V38.9Z" fill="#4b505b"/></svg>
<div class="lab" style="left:1098.4px;top:976px">On-line Users</div>
<svg class="ico" style="left:1451.25px;top:920px" viewBox="0 0 48 48"><defs><linearGradient id="g35" x1="0" y1="0" x2="0" y2="1"><stop offset="0" stop-color="#3561f8"/><stop offset="1" stop-color="#4f96fc"/></linearGradient><linearGradient id="g36" x1="0" y1="0" x2="0" y2="1"><stop offset="0" stop-color="#3866f8"/><stop offset="1" stop-color="#4686fb"/></linearGradient></defs><circle cx="24.7" cy="24" r="23.9" fill="url(#g35)"/>
<path d="M12.6 17.2H17.9L19 14.2C19.2 13.7 19.7 13.3 20.3 13.3H29.3C29.9 13.3 30.4 13.7 30.6 14.2L31.7 17.2H37C37.4 17.2 37.8 17.6 37.8 18V33.9C37.8 34.4 37.4 34.8 37 34.8H12.6C12.2 34.8 11.8 34.4 11.8 33.9V18C11.8 17.6 12.2 17.2 12.6 17.2Z" fill="#fff"/>
<rect x="15.3" y="20.4" width="19" height="10.4" fill="url(#g36)"/>
<rect x="18.1" y="28.8" width="2.6" height="2.2" fill="#fff"/><rect x="23.6" y="28.8" width="2.6" height="2.2" fill="#fff"/><rect x="29.1" y="28.8" width="2.6" height="2.2" fill="#fff"/></svg>
<div class="lab" style="left:1350.0px;top:976px">Port</div>
<svg class="ico" style="left:1702.75px;top:920px" viewBox="0 0 48 48"><path d="M12.4 2.7H28L39.7 14.4V41.6C39.7 43.4 38.3 44.8 36.5 44.8H12.4C10.6 44.8 9.2 43.4 9.2 41.6V5.9C9.2 4.1 10.6 2.7 12.4 2.7Z" fill="#272b41"/>
<path d="M28 3.2L39.5 14.6H30.2C29 14.6 28 13.6 28 12.4Z" fill="#8fb85b"/>
<rect x="12.4" y="7" width="8.8" height="1.1" fill="#8fb85b"/><rect x="12.4" y="9.4" width="11" height="1.5" fill="#7a9c52"/><rect x="12.4" y="12" width="13" height="1.1" fill="#8fb85b"/>
<rect x="17.3" y="21.8" width="27.1" height="12.3" rx="1.3" fill="#8fb85b"/>
<text x="30.9" y="30.9" text-anchor="middle" font-family="Liberation Sans,sans-serif" font-weight="bold" font-size="8.6" fill="#2a2f45" textLength="13.5" lengthAdjust="spacingAndGlyphs">LOG</text>
<rect x="19.3" y="39.9" width="10.3" height="1.1" fill="#8fb85b"/><rect x="18.3" y="41.9" width="13" height="1.1" fill="#8fb85b"/></svg>
<div class="lab" style="left:1601.6px;top:976px">System Log</div>
</div>
<div id="status"><svg class="ic" style="left:10.0px;top:8.2px" width="20" height="20" viewBox="0 0 20 20" ><path d="M10.00 3.90 L10.58 3.79 L11.22 3.51 L11.94 3.16 L12.74 2.88 L13.54 2.82 L14.25 3.04 L14.80 3.55 L15.14 4.27 L15.30 5.10 L15.36 5.90 L15.43 6.59 L15.63 7.15 L16.01 7.60 L16.58 8.01 L17.24 8.46 L17.88 9.01 L18.33 9.67 L18.50 10.40 L18.33 11.13 L17.88 11.79 L17.24 12.34 L16.58 12.79 L16.01 13.20 L15.63 13.65 L15.43 14.21 L15.36 14.90 L15.30 15.70 L15.14 16.53 L14.80 17.25 L14.25 17.76 L13.54 17.98 L12.74 17.92 L11.94 17.64 L11.22 17.29 L10.58 17.01 L10.00 16.90 L9.42 17.01 L8.78 17.29 L8.06 17.64 L7.26 17.92 L6.46 17.98 L5.75 17.76 L5.20 17.25 L4.86 16.53 L4.70 15.70 L4.64 14.90 L4.57 14.21 L4.37 13.65 L3.99 13.20 L3.42 12.79 L2.76 12.34 L2.12 11.79 L1.67 11.13 L1.50 10.40 L1.67 9.67 L2.12 9.01 L2.76 8.46 L3.42 8.01 L3.99 7.60 L4.37 7.15 L4.57 6.59 L4.64 5.90 L4.70 5.10 L4.86 4.27 L5.20 3.55 L5.75 3.04 L6.46 2.82 L7.26 2.88 L8.06 3.16 L8.78 3.51 L9.42 3.79Z" fill="none" stroke="#c6c7cd" stroke-width="1.25" stroke-linecap="round" stroke-linejoin="round"/><circle cx="10" cy="10.4" r="2.9" fill="none" stroke="#c6c7cd" stroke-width="1.25" stroke-linecap="round" stroke-linejoin="round" style="stroke:#9a9ba3"/></svg><svg class="ic" style="left:46.0px;top:8.2px" width="20" height="20" viewBox="0 0 20 20" ><rect x="4.2" y="4" width="3.8" height="12.4" rx="1.6" fill="none" stroke="#c6c7cd" stroke-width="1.25" stroke-linecap="round" stroke-linejoin="round"/><rect x="11.8" y="4" width="3.8" height="12.4" rx="1.6" fill="none" stroke="#c6c7cd" stroke-width="1.25" stroke-linecap="round" stroke-linejoin="round"/></svg><svg class="ic" style="left:81.0px;top:8.2px" width="20" height="20" viewBox="0 0 20 20" ><path d="M5.4 16C3 16 1.2 14.4 1.2 12.2C1.2 10.2 2.6 8.8 4.4 8.6C4.6 5.6 6.8 3.6 9.6 3.6C12 3.6 13.8 5 14.6 7.2C17 7.2 18.8 9 18.8 11.6C18.8 14.2 17 16 14.6 16Z" fill="none" stroke="#c6c7cd" stroke-width="1.25" stroke-linecap="round" stroke-linejoin="round" style="fill:#8b8d95"/></svg><svg class="ic" style="left:116.0px;top:8.2px" width="20" height="20" viewBox="0 0 20 20" ><rect x="2.2" y="3.6" width="15.6" height="13.6" rx="3.6" fill="none" stroke="#c6c7cd" stroke-width="1.25" stroke-linecap="round" stroke-linejoin="round" style="fill:#3a3b44"/><path d="M2.8 5.6C6 7.9 8 8.7 10 8.7C12 8.7 14 7.9 17.2 5.6" fill="none" stroke="#c6c7cd" stroke-width="1.25" stroke-linecap="round" stroke-linejoin="round"/></svg><svg class="ic" style="left:151.0px;top:8.2px" width="20" height="20" viewBox="0 0 20 20" ><rect x="2.6" y="3.4" width="14.8" height="14" rx="3.4" fill="none" stroke="#c6c7cd" stroke-width="1.25" stroke-linecap="round" stroke-linejoin="round"/><path d="M6.6 1.6V4.4M13.4 1.6V4.4M2.8 7.6H17.2" fill="none" stroke="#c6c7cd" stroke-width="1.25" stroke-linecap="round" stroke-linejoin="round"/><path d="M6.6 10.8H6.8M10 10.8H10.2M13.4 10.8H13.6M6.6 14H6.8M10 14H10.2" fill="none" stroke="#c6c7cd" stroke-width="1.25" stroke-linecap="round" stroke-linejoin="round" style="stroke-width:1.7"/></svg><svg class="ic" style="left:1507.5px;top:8.2px" width="20" height="20" viewBox="0 0 20 20" ><rect x="2.4" y="2.4" width="15.2" height="15.2" rx="2.6" fill="none" stroke="#c6c7cd" stroke-width="1.25" stroke-linecap="round" stroke-linejoin="round"/><path d="M7 13L13 7" fill="none" stroke="#c6c7cd" stroke-width="1.25" stroke-linecap="round" stroke-linejoin="round" style="stroke-width:1.6"/><path d="M9.4 6.2H13.8V10.6ZM6.2 9.4V13.8H10.6Z" fill="#c6c7cd"/></svg><svg class="ic" style="left:1542.5px;top:8.2px" width="20" height="20" viewBox="0 0 20 20" ><path d="M2.6 6.6V5.4C2.6 3.6 3.6 2.6 5.4 2.6H6.6M13.4 2.6H14.6C16.4 2.6 17.4 3.6 17.4 5.4V6.6M17.4 13.4V14.6C17.4 16.4 16.4 17.4 14.6 17.4H13.4M6.6 17.4H5.4C3.6 17.4 2.6 16.4 2.6 14.6V13.4" fill="none" stroke="#c6c7cd" stroke-width="1.25" stroke-linecap="round" stroke-linejoin="round"/><circle cx="10" cy="10" r="3.2" fill="none" stroke="#c6c7cd" stroke-width="1.25" stroke-linecap="round" stroke-linejoin="round"/></svg><svg class="ic" style="left:1577.5px;top:8.2px" width="20" height="20" viewBox="0 0 20 20" ><path d="M7.2 4H5.2C3.4 4 2.4 5 2.4 6.8V13.2C2.4 15 3.4 16 5.2 16H7.2M12.8 4H14.8C16.6 4 17.6 5 17.6 6.8V13.2C17.6 15 16.600000000000001 16 14.8 16H12.8" fill="none" stroke="#72737c" stroke-width="1.25" stroke-linecap="round" stroke-linejoin="round"/><path d="M10 1.4V18.6" fill="none" stroke="#72737c" stroke-width="1.25" stroke-linecap="round" stroke-linejoin="round" stroke-dasharray="1.6 1.6" style="stroke-width:1"/></svg><svg class="ic" style="left:1614.0px;top:8.2px" width="20" height="20" viewBox="0 0 20 20" ><path d="M7.4 17.4H6.4C4.4 17.4 3.2 16 3.2 14V8C3.2 4.6 5.6 2.4 9 2.4C12.4 2.4 14.8 4.6 14.8 8V9.6" fill="none" stroke="#c6c7cd" stroke-width="1.25" stroke-linecap="round" stroke-linejoin="round"/><path d="M3.4 8.6H7.2C8.2 8.6 8.8 8 8.8 7V2.6" fill="none" stroke="#c6c7cd" stroke-width="1.25" stroke-linecap="round" stroke-linejoin="round"/><path d="M12 13.6L9.8 15.8L12 18M15 13.6L17.2 15.8L15 18" fill="none" stroke="#c6c7cd" stroke-width="1.25" stroke-linecap="round" stroke-linejoin="round"/></svg><span class="tx" style="left:1652.0px;top:9.7px;font-size:12px;line-height:16px;color:#e8e8ec;font-weight:normal;letter-spacing:-0.125px;">Nulstil</span><div class="ic" style="left:1695.2px;top:15.4px;width:128.8px;height:5px;border-radius:2.5px;background:#c6c9d1"></div><div class="ic" style="left:1714px;top:10.2px;width:16px;height:16px;border-radius:50%;background:#3c3c40;border:1.2px solid #dcdce2"></div><span class="tx" style="left:1830.0px;top:9.7px;font-size:12px;line-height:16px;color:#e8e8ec;font-weight:normal;letter-spacing:-0.806px;">100 %</span><span class="tx" style="left:1882.0px;top:9.7px;font-size:12px;line-height:16px;color:#e8e8ec;font-weight:normal;letter-spacing:-0.906px;">19:41</span></div>
</body></html>
